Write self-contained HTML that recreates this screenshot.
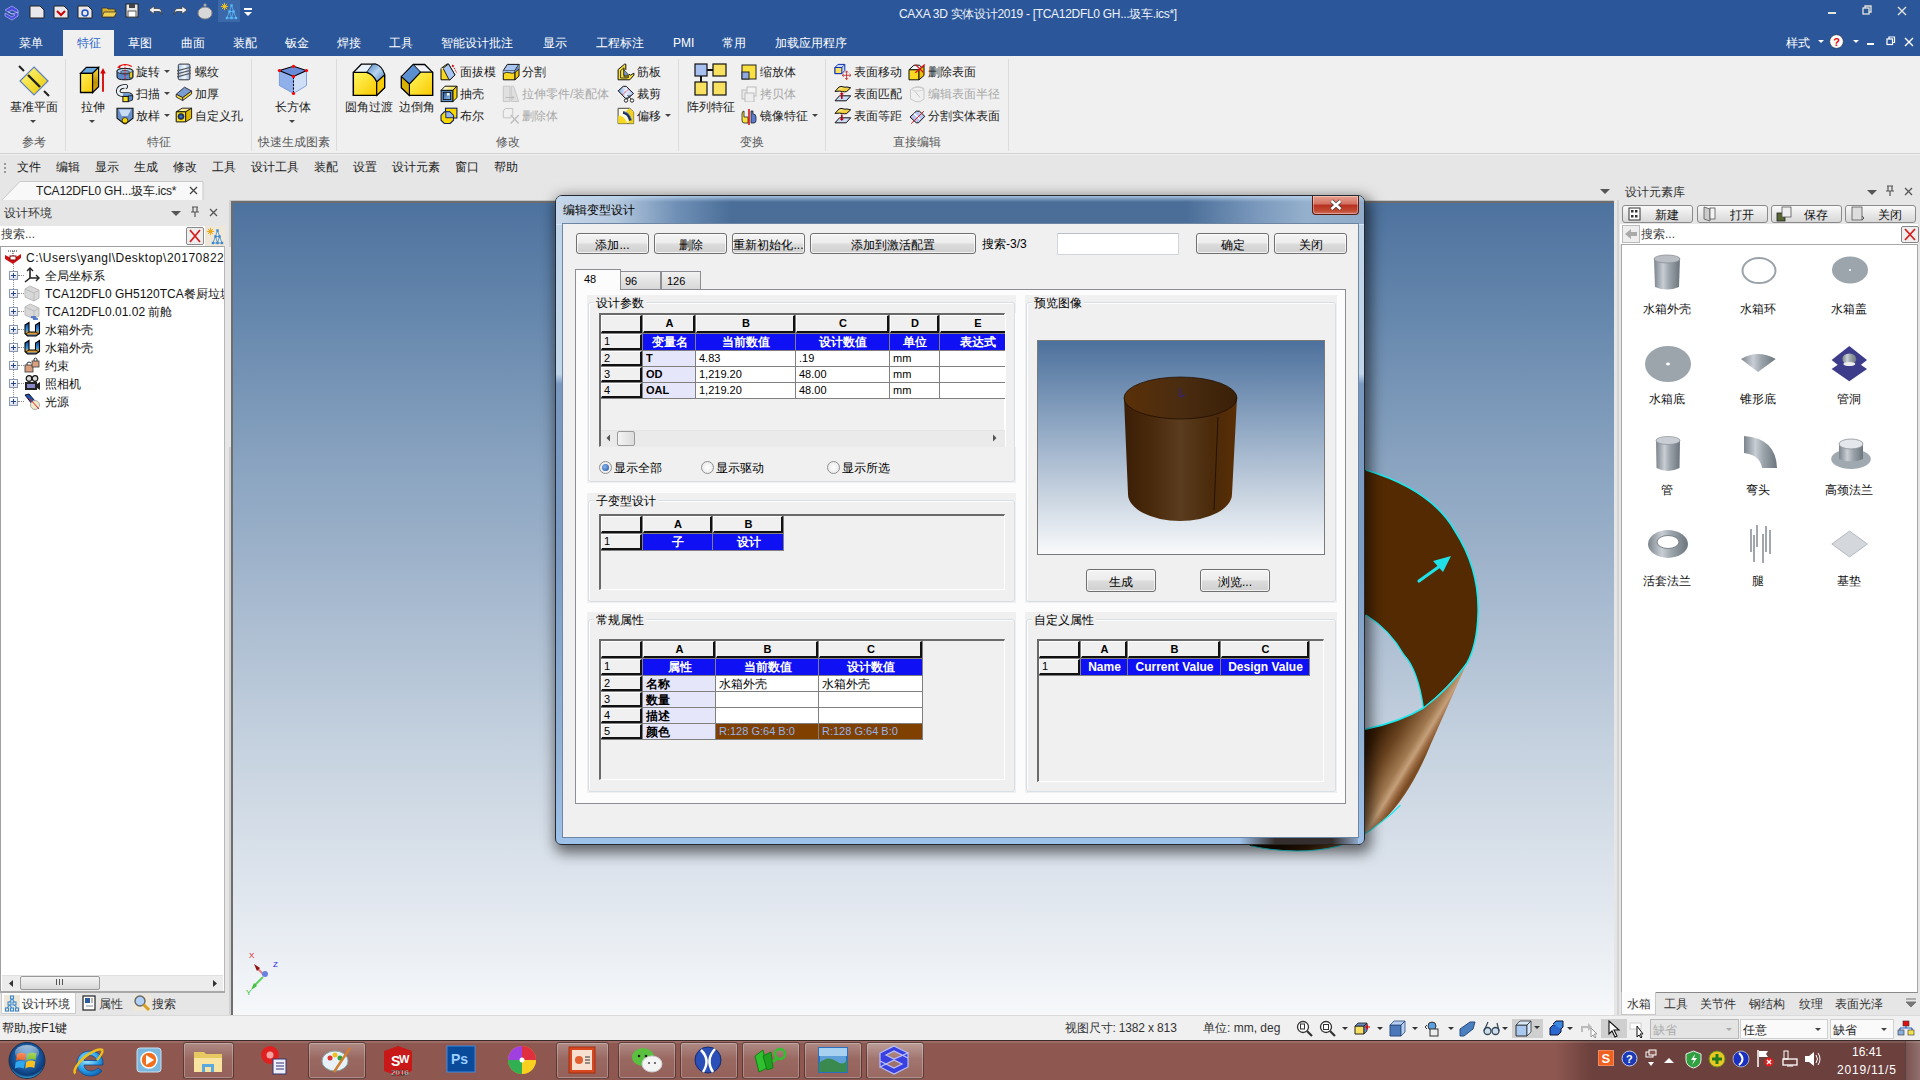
<!DOCTYPE html><html><head><meta charset="utf-8"><style>*{margin:0;padding:0;box-sizing:border-box}
html,body{width:1920px;height:1080px;overflow:hidden;background:#f0f0f0;font-family:"Liberation Sans",sans-serif;font-size:12px;color:#000}
.a{position:absolute;display:block}
.t{position:absolute;white-space:nowrap;line-height:14px}
</style></head><body><div class="a" style="left:0px;top:0px;width:1920px;height:56px;background:#2b579a"></div>
<svg class="a" style="left:3px;top:4px;" width="16" height="18" viewBox="0 0 16 18"><path d="M2 6 L9 2 L15 6 L15 9 L9 6 L5 8 L9 10 L15 8 L15 12 L9 16 L2 12 L2 9 L9 13 L12 11 L5 8 Z" fill="#4a4ae0" stroke="#c8c8ff" stroke-width="0.6"/></svg>
<svg class="a" style="left:29px;top:5px;" width="16" height="14" viewBox="0 0 16 14"><path d="M1 1 H11 L15 5 V13 H1 Z" fill="#e8e8ec" stroke="#222" stroke-width="1"/></svg>
<svg class="a" style="left:53px;top:5px;" width="16" height="14" viewBox="0 0 16 14"><path d="M1 1 H11 L15 5 V13 H1 Z" fill="#e8e8ec" stroke="#222" stroke-width="1"/><path d="M4 6 L8 10 L12 6" stroke="#c00" stroke-width="2" fill="none"/></svg>
<svg class="a" style="left:77px;top:5px;" width="16" height="14" viewBox="0 0 16 14"><path d="M1 1 H11 L15 5 V13 H1 Z" fill="#e8e8ec" stroke="#222" stroke-width="1"/><circle cx="8" cy="8" r="3" fill="none" stroke="#2050c0" stroke-width="1.5"/></svg>
<svg class="a" style="left:101px;top:6px;" width="16" height="12" viewBox="0 0 16 12"><path d="M1 2 H6 L7 3 H14 V11 H1 Z" fill="#d8b030" stroke="#333" stroke-width="0.8"/><path d="M3 6 H16 L13 11 H1 Z" fill="#f0d050" stroke="#333" stroke-width="0.8"/></svg>
<svg class="a" style="left:125px;top:3px;" width="14" height="15" viewBox="0 0 14 15"><rect x="1" y="1" width="12" height="13" fill="#e8e8e8" stroke="#222"/><rect x="4" y="1" width="6" height="4" fill="#444"/><rect x="3" y="8" width="8" height="6" fill="#fff" stroke="#555"/></svg>
<svg class="a" style="left:148px;top:4px;" width="16" height="12" viewBox="0 0 16 12"><path d="M6 2 L1 6 L6 10 V7.5 H11 Q14 7.5 14 11 Q14 4.5 10 4.5 H6 Z" fill="#f0f0f0" stroke="#444" stroke-width="0.8"/></svg>
<svg class="a" style="left:172px;top:4px;" width="16" height="12" viewBox="0 0 16 12"><path d="M10 2 L15 6 L10 10 V7.5 H5 Q2 7.5 2 11 Q2 4.5 6 4.5 H10 Z" fill="#f0f0f0" stroke="#444" stroke-width="0.8"/></svg>
<svg class="a" style="left:197px;top:2px;" width="16" height="18" viewBox="0 0 16 18"><ellipse cx="8" cy="11" rx="7" ry="6" fill="#d8d8d8" stroke="#888"/><circle cx="8" cy="3" r="1.5" fill="#aaa"/></svg>
<div class="a" style="left:218px;top:0px;width:22px;height:22px;background:#3a68a8"></div>
<svg class="a" style="left:220px;top:2px;" width="18" height="18" viewBox="0 0 18 18"><circle cx="4.5" cy="4.5" r="2" fill="#f0c020"/><path d="M4.5 0.8 V8.2 M0.8 4.5 H8.2 M1.9 1.9 L7.1 7.1 M7.1 1.9 L1.9 7.1" stroke="#f0c020" stroke-width=".9"/><path d="M11.5 3.5 L7 16 M11.5 3.5 L16 16 M9.5 9.5 H13.5 M7 16 H16 M9.5 9.5 L11.5 16 M13.5 9.5 L11.5 16" stroke="#5ab8f8" stroke-width=".8" fill="none"/><g fill="#5ab8f8"><rect x="10.3" y="2.3" width="2.4" height="2.4"/><rect x="8.3" y="8.3" width="2.4" height="2.4"/><rect x="12.3" y="8.3" width="2.4" height="2.4"/><rect x="5.8" y="14.8" width="2.4" height="2.4"/><rect x="10.3" y="14.8" width="2.4" height="2.4"/><rect x="14.8" y="14.8" width="2.4" height="2.4"/></g></svg>
<div class="a" style="left:244px;top:8px;width:8px;height:1.5px;background:#fff"></div>
<svg class="a" style="left:243px;top:11px;" width="10" height="6" viewBox="0 0 10 6"><path d="M1 1 H9 L5 5 Z" fill="#fff"/></svg>
<div class="t " style="left:899px;top:7px;font-size:12px;color:#eef2f8;letter-spacing:-0.3px">CAXA 3D 实体设计2019 - [TCA12DFL0 GH...圾车.ics*]</div>
<div class="a" style="left:1828px;top:12px;width:8px;height:2px;background:#e4e4dc"></div>
<svg class="a" style="left:1862px;top:5px;" width="11" height="10" viewBox="0 0 11 10"><rect x="1" y="3" width="6" height="6" fill="none" stroke="#e4e4dc" stroke-width="1.3"/><path d="M3 3 V1 H9 V7 H7" fill="none" stroke="#e4e4dc" stroke-width="1.3"/></svg>
<svg class="a" style="left:1897px;top:6px;" width="10" height="10" viewBox="0 0 10 10"><path d="M1 1 L9 9 M9 1 L1 9" stroke="#e4e4dc" stroke-width="1.4"/></svg>
<div class="a" style="left:63px;top:30px;width:51px;height:26px;background:#f0f0f0"></div>
<div class="t " style="left:19px;top:36px;font-size:12px;color:#fff">菜单</div>
<div class="t " style="left:77px;top:36px;font-size:12px;color:#2b66c8">特征</div>
<div class="t " style="left:128px;top:36px;font-size:12px;color:#fff">草图</div>
<div class="t " style="left:181px;top:36px;font-size:12px;color:#fff">曲面</div>
<div class="t " style="left:233px;top:36px;font-size:12px;color:#fff">装配</div>
<div class="t " style="left:285px;top:36px;font-size:12px;color:#fff">钣金</div>
<div class="t " style="left:337px;top:36px;font-size:12px;color:#fff">焊接</div>
<div class="t " style="left:389px;top:36px;font-size:12px;color:#fff">工具</div>
<div class="t " style="left:441px;top:36px;font-size:12px;color:#fff">智能设计批注</div>
<div class="t " style="left:543px;top:36px;font-size:12px;color:#fff">显示</div>
<div class="t " style="left:596px;top:36px;font-size:12px;color:#fff">工程标注</div>
<div class="t " style="left:673px;top:36px;font-size:12px;color:#fff">PMI</div>
<div class="t " style="left:722px;top:36px;font-size:12px;color:#fff">常用</div>
<div class="t " style="left:775px;top:36px;font-size:12px;color:#fff">加载应用程序</div>
<div class="t " style="left:1786px;top:36px;font-size:12px;color:#fff">样式</div>
<div class="a" style="left:1817.5px;top:40.25px;width:0;height:0;border-left:3.5px solid transparent;border-right:3.5px solid transparent;border-top:3.5px solid #fff"></div>
<svg class="a" style="left:1829px;top:34px;" width="15" height="15" viewBox="0 0 15 15"><circle cx="7.5" cy="7.5" r="6.8" fill="#fff" stroke="#333" stroke-width="0.6"/><text x="7.5" y="12" font-size="11" font-weight="bold" text-anchor="middle" fill="#e00" font-family="Liberation Sans">?</text></svg>
<div class="a" style="left:1852.5px;top:40.25px;width:0;height:0;border-left:3.5px solid transparent;border-right:3.5px solid transparent;border-top:3.5px solid #fff"></div>
<div class="a" style="left:1867px;top:43px;width:7px;height:2px;background:#fff"></div>
<svg class="a" style="left:1886px;top:36px;" width="10" height="10" viewBox="0 0 10 10"><rect x="1" y="3" width="5.5" height="5.5" fill="none" stroke="#fff" stroke-width="1.2"/><path d="M3 3 V1 H8.5 V6.5 H6.5" fill="none" stroke="#fff" stroke-width="1.2"/></svg>
<svg class="a" style="left:1904px;top:37px;" width="10" height="10" viewBox="0 0 10 10"><path d="M1 1 L9 9 M9 1 L1 9" stroke="#fff" stroke-width="1.4"/></svg>
<div class="a" style="left:0px;top:56px;width:1920px;height:98px;background:#f0f0f0;border-bottom:1px solid #d2d2d2"></div>
<div class="a" style="left:65px;top:59px;width:1px;height:92px;background:#dcdcdc"></div>
<div class="a" style="left:251px;top:59px;width:1px;height:92px;background:#dcdcdc"></div>
<div class="a" style="left:336px;top:59px;width:1px;height:92px;background:#dcdcdc"></div>
<div class="a" style="left:678px;top:59px;width:1px;height:92px;background:#dcdcdc"></div>
<div class="a" style="left:825px;top:59px;width:1px;height:92px;background:#dcdcdc"></div>
<div class="a" style="left:1008px;top:59px;width:1px;height:92px;background:#dcdcdc"></div>
<div class="t " style="left:-66.0px;width:200px;text-align:center;top:135px;font-size:12px;color:#5a5a5a">参考</div>
<div class="t " style="left:59.0px;width:200px;text-align:center;top:135px;font-size:12px;color:#5a5a5a">特征</div>
<div class="t " style="left:194.0px;width:200px;text-align:center;top:135px;font-size:12px;color:#5a5a5a">快速生成图素</div>
<div class="t " style="left:408.0px;width:200px;text-align:center;top:135px;font-size:12px;color:#5a5a5a">修改</div>
<div class="t " style="left:652.0px;width:200px;text-align:center;top:135px;font-size:12px;color:#5a5a5a">变换</div>
<div class="t " style="left:817.0px;width:200px;text-align:center;top:135px;font-size:12px;color:#5a5a5a">直接编辑</div>
<svg class="a" style="left:17px;top:64px;" width="34" height="34" viewBox="0 0 34 34"><defs><linearGradient id="jz" x1="0" y1="0" x2="1" y2="1"><stop offset="0" stop-color="#fff880"/><stop offset="1" stop-color="#e8c800"/></linearGradient></defs><path d="M2 2 L7 7 M27 27 L32 32" stroke="#222" stroke-width="2"/><path d="M17 3 L31 17 L17 31 L3 17 Z" fill="url(#jz)" stroke="#6080c0" stroke-width="1.2"/><path d="M11 11 L23 23" stroke="#222" stroke-width="2.4"/></svg>
<div class="t " style="left:10px;top:100px;font-size:12px;color:#222">基准平面</div>
<div class="a" style="left:30px;top:119.5px;width:0;height:0;border-left:3px solid transparent;border-right:3px solid transparent;border-top:3px solid #444"></div>
<svg class="a" style="left:75px;top:62px;" width="35" height="35" viewBox="0 0 35 35"><defs><linearGradient id="lg1" x1="0" y1="0" x2="1" y2="1"><stop offset="0" stop-color="#fff060"/><stop offset="1" stop-color="#f8c800"/></linearGradient><linearGradient id="lg2" x1="0" y1="0" x2="0" y2="1"><stop offset="0" stop-color="#f8e040"/><stop offset=".6" stop-color="#c09000"/><stop offset="1" stop-color="#e0b000"/></linearGradient></defs><path d="M5.5 11.4 L11.3 5.4 H23.6 L17.6 11.4 Z" fill="#6aa8e0" stroke="#000" stroke-width="1.1"/><path d="M5.5 11.4 H17.6 V30.5 H5.5 Z" fill="url(#lg1)" stroke="#000" stroke-width="1.3"/><path d="M17.6 11.4 L23.6 5.4 V24.8 L17.6 30.5 Z" fill="url(#lg2)" stroke="#000" stroke-width="1.2"/><path d="M28 29.7 V10" stroke="#d80000" stroke-width="1.8"/><path d="M25.2 11.5 L28 6 L30.8 11.5 Z" fill="#d80000"/></svg>
<div class="t " style="left:81px;top:100px;font-size:12px;color:#222">拉伸</div>
<div class="a" style="left:89px;top:119.5px;width:0;height:0;border-left:3px solid transparent;border-right:3px solid transparent;border-top:3px solid #444"></div>
<svg class="a" style="left:114px;top:62px;" width="80" height="64" viewBox="0 0 80 64"><defs><linearGradient id="thg" x1="0" x2="1"><stop offset="0" stop-color="#a8c8f0"/><stop offset=".55" stop-color="#f4f8ff"/><stop offset="1" stop-color="#90b0e0"/></linearGradient></defs><path d="M3 9 Q3 6.5 11 6.5 Q19 6.5 19 9 V15 Q19 17.8 11 17.8 Q3 17.8 3 15 Z" fill="#5a88c8" stroke="#111" stroke-width="1"/><ellipse cx="11" cy="9.2" rx="8" ry="2.8" fill="#b8d4f0" stroke="#111" stroke-width=".8"/><ellipse cx="11" cy="10" rx="4.5" ry="1.6" fill="#7aa0d0" stroke="#111" stroke-width=".6"/><path d="M15.7 10.7 L18.4 9.5 V15.5 L15.7 16.2 Z" fill="#f8e020" stroke="#111" stroke-width=".6"/><path d="M11 2.5 V18" stroke="#e00" stroke-width="1" stroke-dasharray="1.6 1"/><path d="M5 4.5 Q11 0.5 17.8 4.5" stroke="#e00" stroke-width="1.2" fill="none"/><path d="M3 5.5 L6.5 2.8 L6.2 6.2 Z" fill="#e00"/><path d="M11 25.5 Q12.5 24 11 24.2 Q4.5 24.8 4.2 29 Q4 32.3 9 32.6 H14.5 Q17 32.8 17 35.5" fill="none" stroke="#111" stroke-width="4.6"/><path d="M11 25.5 Q12.5 24 11 24.2 Q4.5 24.8 4.2 29 Q4 32.3 9 32.6 H14.5 Q17 32.8 17 35.5" fill="none" stroke="#e8f0fa" stroke-width="2.8"/><path d="M9 32.6 H14.5 Q17 32.8 17 35.5" fill="none" stroke="#6a98d0" stroke-width="2.8"/><path d="M14.2 34 L18.6 33.5 V38 L14.2 39.7 Z" fill="#5a88c8" stroke="#111" stroke-width=".8"/><rect x="8.9" y="34.4" width="5.3" height="5.3" fill="#f8e020" stroke="#111" stroke-width="1"/><path d="M3 46.2 H19 V56.3 L11.9 61.6 H10.1 L3 56.3 Z" fill="#6a90c8" stroke="#111" stroke-width="1.1"/><path d="M4.8 47.4 H17.2 L13.6 53.9 H7.7 Z" fill="#c8dcf4"/><circle cx="11" cy="58.4" r="2.8" fill="#f8d800" stroke="#111" stroke-width=".7"/><rect x="64.3" y="2.1" width="11.6" height="15.7" rx="1.5" fill="url(#thg)" stroke="#333" stroke-width="1"/><path d="M63.1 8.9 L76.7 5.3 M63.1 11.9 L76.7 8.3 M63.1 14.9 L76.7 11.3" stroke="#555" stroke-width="1.1"/><path d="M70.5 25.2 L77.6 29 L68.7 35.6 L62.2 32.3 Z" fill="#7a9cd0" stroke="#223" stroke-width=".9"/><path d="M62.2 32.3 L68.7 35.6 V38.5 L62.2 35 Z" fill="#f8e040" stroke="#223" stroke-width=".9"/><path d="M68.7 35.6 L77.6 29 V32 L68.7 38.5 Z" fill="#f0d020" stroke="#223" stroke-width=".9"/><path d="M62.2 49.8 L68.1 46.2 H77.6 L71.7 49.8 Z" fill="#fff090" stroke="#111" stroke-width=".9"/><path d="M62.2 49.8 H71.7 V59.9 H62.2 Z" fill="#f8e020" stroke="#111" stroke-width="1"/><path d="M71.7 49.8 L77.6 46.2 V56.3 L71.7 59.9 Z" fill="#e0b800" stroke="#111" stroke-width=".9"/><circle cx="67" cy="54.5" r="3" fill="#1a3a80" stroke="#111" stroke-width=".6"/><circle cx="67" cy="54.5" r="1.3" fill="#4a78c0"/></svg>
<div class="t " style="left:136px;top:65px;font-size:12px;color:#222">旋转</div>
<div class="a" style="left:164px;top:69.5px;width:0;height:0;border-left:3px solid transparent;border-right:3px solid transparent;border-top:3px solid #444"></div>
<div class="t " style="left:136px;top:87px;font-size:12px;color:#222">扫描</div>
<div class="a" style="left:164px;top:91.5px;width:0;height:0;border-left:3px solid transparent;border-right:3px solid transparent;border-top:3px solid #444"></div>
<div class="t " style="left:136px;top:109px;font-size:12px;color:#222">放样</div>
<div class="a" style="left:164px;top:113.5px;width:0;height:0;border-left:3px solid transparent;border-right:3px solid transparent;border-top:3px solid #444"></div>
<div class="t " style="left:195px;top:65px;font-size:12px;color:#222">螺纹</div>
<div class="t " style="left:195px;top:87px;font-size:12px;color:#222">加厚</div>
<div class="t " style="left:195px;top:109px;font-size:12px;color:#222">自定义孔</div>
<svg class="a" style="left:270px;top:60px;" width="46" height="40" viewBox="0 0 46 40"><path d="M9.4 10.5 L23.5 16.4 V33.5 L9.4 25.5 Z" fill="#90b0ec" stroke="#6a90d8" stroke-width=".8"/><path d="M23.5 16.4 L36.5 10.5 V25.5 L23.5 33.5 Z" fill="#cfe0f6" stroke="#6a90d8" stroke-width=".8"/><path d="M9.4 10.5 L23.5 6.3 L36.5 10.5 L23.5 16.4 Z" fill="#6a8cd8" stroke="#000" stroke-width="1.1"/><path d="M23.5 17 V33" stroke="#000" stroke-width="1.1" stroke-dasharray="2 1.5"/><g fill="#f00"><circle cx="9.4" cy="10.5" r="1.6"/><circle cx="23.5" cy="6.3" r="1.6"/><circle cx="36.5" cy="10.5" r="1.6"/><circle cx="23.5" cy="16.4" r="1.6"/><circle cx="23.5" cy="33.5" r="1.6"/></g></svg>
<div class="t " style="left:275px;top:100px;font-size:12px;color:#222">长方体</div>
<div class="a" style="left:289px;top:119.5px;width:0;height:0;border-left:3px solid transparent;border-right:3px solid transparent;border-top:3px solid #444"></div>
<svg class="a" style="left:345px;top:60px;" width="95" height="40" viewBox="0 0 95 40"><defs><linearGradient id="yg" x1="0" y1="0" x2="1" y2="1"><stop offset="0" stop-color="#fff860"/><stop offset="1" stop-color="#f8c800"/></linearGradient><linearGradient id="bg2" x1="0" y1="0" x2="1" y2="1"><stop offset="0" stop-color="#4a80c0"/><stop offset=".5" stop-color="#b8d4f0"/><stop offset="1" stop-color="#4a80c0"/></linearGradient></defs><path d="M8.4 12.4 L16.3 4.2 H30.7 Q37 6 39.6 14.8 V27.7 L31.7 35.4 H8.4 Z" fill="#e8f0f8" stroke="#000" stroke-width="1.3"/><path d="M21.5 12.4 L27.5 4.2 H30.7 Q37 6 39.6 14.8 L31.7 22 Q28 14 21.5 12.4 Z" fill="url(#bg2)" stroke="#000" stroke-width=".8"/><path d="M8.4 12.4 H21.5 Q28 14 31.7 22 V35.4 H8.4 Z" fill="url(#yg)" stroke="#000" stroke-width="1.3"/><path d="M31.7 22 L39.6 14.8 V27.7 L31.7 35.4 Z" fill="#f8cc00" stroke="#000" stroke-width="1.2"/><path d="M56.4 16.6 L68.3 4.5 H79.7 L87.6 12.4 V35.4 H64.4 L56.4 27.7 Z" fill="#f0f4fa" stroke="#000" stroke-width="1.3"/><path d="M56.4 16.6 L68.3 4.5 L75.7 12.2 L64.4 24 Z" fill="#5a90d0" stroke="#000" stroke-width="1"/><path d="M75.7 12.2 H87.6 V35.4 H64.4 V24 Z" fill="url(#yg)" stroke="#000" stroke-width="1.2"/><path d="M56.4 16.6 L64.4 24 V35.4 L56.4 27.7 Z" fill="#d8b000" stroke="#000" stroke-width="1.1"/></svg>
<div class="t " style="left:345px;top:100px;font-size:12px;color:#222">圆角过渡</div>
<div class="t " style="left:399px;top:100px;font-size:12px;color:#222">边倒角</div>
<svg class="a" style="left:438px;top:62px;" width="84" height="64" viewBox="0 0 84 64"><defs><linearGradient id="shg" x1="0" y1="0" x2="1" y2="1"><stop offset="0" stop-color="#2a5a9a"/><stop offset="1" stop-color="#9ac0f0"/></linearGradient><linearGradient id="tyg" x1="0" y1="0" x2="1" y2="0"><stop offset="0" stop-color="#fff"/><stop offset="1" stop-color="#f8e020"/></linearGradient></defs><path d="M3 6.5 L9 2 H10.5 L17 13 L12 17.8 H3 Z" fill="#f8d820" stroke="#111" stroke-width="1"/><path d="M5 6.2 L10.5 2 L17 13 L12 17.8 H11 L5.5 7 Z" fill="#a8c4f0" stroke="#111" stroke-width=".9"/><path d="M3.2 6.6 L5 6.2 L5.5 7 L3.2 7.2 Z" fill="#fff"/><path d="M18.6 10.5 L15 4" stroke="#c00" stroke-width=".9" stroke-dasharray="1.2 .8"/><path d="M13.6 5 L14.3 2.5 L16.4 4 Z" fill="#c00"/><path d="M65.3 8.5 L69.3 2.4 H81 L77 8.5 Z" fill="#a8c4f0" stroke="#111" stroke-width="1"/><path d="M65.3 8.5 H77 V17.8 H65.3 Z" fill="#f8d820" stroke="#111" stroke-width="1"/><path d="M65.3 8.5 H77 V10.5 Q74 12 72 10.8 Q69 9.8 66.5 11 L65.3 11.5 Z" fill="#a8c4f0"/><path d="M77 8.5 L81 2.4 V14 L77 17.8 Z" fill="#f0c800" stroke="#111" stroke-width="1"/><path d="M77 8.5 L81 2.4 V7 L77 10.5 Z" fill="#6a90c8"/><path d="M65.3 11.5 Q69 9.5 72 10.8 Q74 12 77 10.5 L81 7" fill="none" stroke="#111" stroke-width=".8"/><path d="M3.1 28.4 L7 24.2 H19 L14.8 28.4 Z" fill="url(#tyg)" stroke="#111" stroke-width="1"/><path d="M14.8 28.4 L19 24.2 V35.6 L14.8 39.6 Z" fill="#f8d000" stroke="#111" stroke-width="1"/><rect x="3.1" y="28.4" width="11.7" height="11.2" fill="#5a90d0" stroke="#111" stroke-width="1"/><rect x="5.3" y="30.3" width="7.3" height="7.2" fill="url(#shg)" stroke="#111" stroke-width=".9"/><rect x="9" y="31" width="2.5" height="2.5" fill="#fff"/><rect x="7.5" y="46.2" width="11.4" height="9.8" fill="#f8d800" stroke="#10205a" stroke-width="1.1"/><path d="M6.3 49.8 H11.8 L15.5 53.5 V58.2 L12.2 61.5 H6.3 L3 58.2 V53.2 Z" fill="#f8d800" stroke="#10205a" stroke-width="1.1"/><path d="M7.8 49.8 H11.8 L15.5 53.5 V55.7 H7.8 Z" fill="#9ab8e8" stroke="#10205a" stroke-width=".9"/><path d="M65.3 24.2 H72 V39.5 H65.3 Z M73.2 24.2 H75.6 L80.7 39.5 H73.2 Z" fill="#e0e0e0" stroke="#c4c4c4" stroke-width=".9"/><path d="M67.6 35.5 H76 M74.3 33.8 L76 35.5 L74.3 37.2" stroke="#bbb" stroke-width="1" fill="none"/><path d="M65.3 49 L67.3 46.5 H74.8 V53.5 L72.8 55.8 H65.3 Z" fill="#f0f0f0" stroke="#c0c0c0" stroke-width=".9"/><path d="M72.7 53 L80.7 61.5 M80.7 53 L72.7 61.5" stroke="#c0c0c0" stroke-width="1.6"/></svg>
<div class="t " style="left:460px;top:65px;font-size:12px;color:#222">面拔模</div>
<div class="t " style="left:460px;top:87px;font-size:12px;color:#222">抽壳</div>
<div class="t " style="left:460px;top:109px;font-size:12px;color:#222">布尔</div>
<div class="t " style="left:522px;top:65px;font-size:12px;color:#222">分割</div>
<div class="t " style="left:522px;top:87px;font-size:12px;color:#a8a8a8">拉伸零件/装配体</div>
<div class="t " style="left:522px;top:109px;font-size:12px;color:#a8a8a8">删除体</div>
<svg class="a" style="left:614px;top:62px;" width="64" height="64" viewBox="0 0 64 64"><defs><linearGradient id="trg" x1="0" y1="0" x2="1" y2="0"><stop offset="0" stop-color="#7aa0e0"/><stop offset=".5" stop-color="#e8f0ff"/><stop offset="1" stop-color="#a8c0f0"/></linearGradient></defs><path d="M4.1 7.6 L10.5 2.2 H11.8 V8.6 L16.3 13.3 L19.9 11.2 V13.2 L15.8 17.8 H4.1 Z" fill="#f8e040" stroke="#111" stroke-width="1"/><path d="M6.6 8.6 L10 5.8 V14.8 H15 L13 16 H6.6 Z" fill="none" stroke="#111" stroke-width=".8"/><path d="M9.8 7.4 L15 13.3 H9.8 Z" fill="#7a9ad8" stroke="#111" stroke-width=".7"/><path d="M11.3 7.8 L15.3 12" stroke="#fff" stroke-width="1.2"/><path d="M4.2 28.8 L9.3 24.3 H12.2 L19.5 31.5 L14.2 36.2 H11.2 Z" fill="url(#trg)" stroke="#111" stroke-width="1"/><path d="M8.2 33 L14.6 27.2" stroke="#e00" stroke-width=".9" stroke-dasharray="1.2 .8"/><circle cx="12" cy="38.5" r="1.7" fill="#fff" stroke="#111" stroke-width=".9"/><circle cx="18" cy="38.5" r="1.7" fill="#fff" stroke="#111" stroke-width=".9"/><path d="M12.8 37 L16.5 33 M17.2 37 L13.5 33" stroke="#333" stroke-width="1"/><path d="M4.1 46.3 H15.8 L19.6 50 V61.6 H4.1 Z" fill="#fffbe0" stroke="#444" stroke-width="1"/><path d="M4.1 53.8 Q10 53 13.5 61.6 H4.1 Z" fill="#f8d820"/><path d="M15.8 46.3 L19.6 50 V61.6 H14.5 Q15 52 12 49 Z" fill="#f0d020"/><path d="M9 50.3 Q14.5 51 16.5 58.5" stroke="#1a3060" stroke-width="2.8" fill="none"/><path d="M9.5 49.6 Q15.5 50.5 17.5 57.5" stroke="#7a98c8" stroke-width=".7" fill="none"/></svg>
<div class="t " style="left:637px;top:65px;font-size:12px;color:#222">筋板</div>
<div class="t " style="left:637px;top:87px;font-size:12px;color:#222">裁剪</div>
<div class="t " style="left:637px;top:109px;font-size:12px;color:#222">偏移</div>
<div class="a" style="left:665px;top:113.5px;width:0;height:0;border-left:3px solid transparent;border-right:3px solid transparent;border-top:3px solid #444"></div>
<svg class="a" style="left:694px;top:63px;" width="34" height="34" viewBox="0 0 34 34"><rect x="1" y="1" width="12" height="12" fill="#a8c0f0" stroke="#111" stroke-width="1.2"/><rect x="19" y="1" width="13" height="12" fill="#f8e060" stroke="#111" stroke-width="1.2"/><rect x="1" y="19" width="12" height="13" fill="#f8e060" stroke="#111" stroke-width="1.2"/><rect x="19" y="19" width="13" height="13" fill="#f8e060" stroke="#111" stroke-width="1.2"/><path d="M13 7 H19 M7 13 V19" stroke="#111" stroke-width="2"/></svg>
<div class="t " style="left:687px;top:100px;font-size:12px;color:#222">阵列特征</div>
<svg class="a" style="left:741px;top:64px;" width="16" height="16" viewBox="0 0 16 16"><rect x="1" y="1" width="14" height="14" fill="#f8e040" stroke="#222"/><rect x="1" y="8" width="7" height="7" fill="#90a8e0" stroke="#222"/></svg>
<div class="t " style="left:760px;top:65px;font-size:12px;color:#222">缩放体</div>
<svg class="a" style="left:741px;top:86px;" width="16" height="16" viewBox="0 0 16 16"><rect x="1" y="4" width="9" height="9" fill="#e8e8e8" stroke="#bbb"/><rect x="6" y="1" width="9" height="9" fill="#f4f4f4" stroke="#bbb"/><rect x="4" y="7" width="9" height="9" fill="#eee" stroke="#bbb"/></svg>
<div class="t " style="left:760px;top:87px;font-size:12px;color:#a8a8a8">拷贝体</div>
<svg class="a" style="left:741px;top:108px;" width="16" height="17" viewBox="0 0 16 17"><path d="M1 6 Q1 3 3 3 V9 H7 V15 H3 Q1 15 1 12 Z" fill="#f8e040" stroke="#222" stroke-width=".8"/><path d="M8 1 V17" stroke="#d00" stroke-width="1.5"/><path d="M10 3 V15 H13 Q15 15 15 12 V9 Q15 6 12 6 V3 Z" fill="#5a7ad0" stroke="#222" stroke-width=".8"/></svg>
<div class="t " style="left:760px;top:109px;font-size:12px;color:#222">镜像特征</div>
<div class="a" style="left:812px;top:113.5px;width:0;height:0;border-left:3px solid transparent;border-right:3px solid transparent;border-top:3px solid #444"></div>
<svg class="a" style="left:830px;top:62px;" width="100" height="64" viewBox="0 0 100 64"><defs><linearGradient id="wyg" x1="0" y1="0" x2="1" y2="1"><stop offset="0" stop-color="#fff4a0"/><stop offset="1" stop-color="#e8b800"/></linearGradient></defs><path d="M5 5.5 L8 2.4 H14.8 V8.6 L11.8 11.6 H5 Z" fill="#c8dcf8" stroke="#1030b0" stroke-width="1"/><rect x="5" y="5.5" width="6.8" height="6.1" fill="#f8e060" stroke="#1030b0" stroke-width="1"/><path d="M11.8 5.5 L14.8 2.4" stroke="#1030b0" stroke-width=".8"/><path d="M16.6 9.2 V17.4 M12.5 13.3 H20.7" stroke="#c03030" stroke-width=".9"/><path d="M15.2 10.5 L16.6 8.9 L18 10.5 M15.2 16.1 L16.6 17.7 L18 16.1 M13.8 11.9 L12.2 13.3 L13.8 14.7 M19.4 11.9 L21 13.3 L19.4 14.7" stroke="#c03030" stroke-width=".9" fill="none"/><path d="M5 29.4 L9 25 Q11 24 13 24.8 Q15 25.5 17 25 L20.7 25.8 L16.7 29.5 Q14.5 30.2 12.5 29.5 Q10 28.8 5 29.4 Z" fill="url(#wyg)" stroke="#111" stroke-width="1"/><path d="M5 38.8 L9.5 33.8 H20.7 L16.2 38.8 Z" fill="#c8dcf8" stroke="#111" stroke-width="1"/><path d="M11.8 37 V31.5" stroke="#c00010" stroke-width="1.6"/><path d="M9.6 32.2 L11.8 29.9 L14 32.2 Z" fill="#c00010"/><path d="M5 51.4 L9 47 Q11 46 13 46.8 Q15 47.5 17 47 L20.7 47.8 L16.7 51.5 Q14.5 52.2 12.5 51.5 Q10 50.8 5 51.4 Z" fill="url(#wyg)" stroke="#111" stroke-width="1"/><path d="M5 60.8 L9.5 55.8 H20.7 L16.2 60.8 Z" fill="#c8dcf8" stroke="#111" stroke-width="1"/><path d="M11.8 52.5 V57.5" stroke="#c00010" stroke-width="1.6"/><path d="M9.6 56.7 L11.8 59 L14 56.7 Z" fill="#c00010"/><path d="M79 7.8 L84 3.2 H89.5 L94 7.8 Z" fill="#f4f8ff" stroke="#111" stroke-width="1"/><path d="M79 7.8 H89 V17.8 H79 Z" fill="#f8d820" stroke="#111" stroke-width="1"/><path d="M89 7.8 L94 3.8 V13.5 L89 17.8 Z" fill="#f0c000" stroke="#111" stroke-width="1"/><path d="M85.3 10.7 L94.8 2.4 M85.5 2.6 L93.5 10.5" stroke="#e01010" stroke-width="1.3"/><path d="M82 26.5 L86 24.9 H90 L94 26.5 V37 L90 39.7 H86 L80.5 37 V28 Z" fill="#f0f0f0" stroke="#c8c8c8" stroke-width="1"/><ellipse cx="87.5" cy="27.2" rx="5.8" ry="1.8" fill="none" stroke="#c8c8c8" stroke-width=".8"/><path d="M85 29.5 L90 35.5" stroke="#c8c8c8" stroke-width="1"/><path d="M80 55 L86.3 49.2 H89.5 L94.8 54.3 L88.5 60.8 H86.3 Z" fill="#b8c8f0" stroke="#111" stroke-width="1"/><path d="M84 51.5 L90 57.5" stroke="#fff" stroke-width="1.2"/><path d="M81.2 61.6 L93.9 49.2" stroke="#e01010" stroke-width="1"/></svg>
<div class="t " style="left:854px;top:65px;font-size:12px;color:#222">表面移动</div>
<div class="t " style="left:854px;top:87px;font-size:12px;color:#222">表面匹配</div>
<div class="t " style="left:854px;top:109px;font-size:12px;color:#222">表面等距</div>
<div class="t " style="left:928px;top:65px;font-size:12px;color:#222">删除表面</div>
<div class="t " style="left:928px;top:87px;font-size:12px;color:#a8a8a8">编辑表面半径</div>
<div class="t " style="left:928px;top:109px;font-size:12px;color:#222">分割实体表面</div>
<div class="a" style="left:0px;top:155px;width:1920px;height:26px;background:#e6e6e6"></div>
<div class="a" style="left:4px;top:163px;width:2px;height:2px;background:#999"></div>
<div class="a" style="left:4px;top:167px;width:2px;height:2px;background:#999"></div>
<div class="a" style="left:4px;top:171px;width:2px;height:2px;background:#999"></div>
<div class="t " style="left:17px;top:160px;font-size:12px;color:#222">文件</div>
<div class="t " style="left:56px;top:160px;font-size:12px;color:#222">编辑</div>
<div class="t " style="left:95px;top:160px;font-size:12px;color:#222">显示</div>
<div class="t " style="left:134px;top:160px;font-size:12px;color:#222">生成</div>
<div class="t " style="left:173px;top:160px;font-size:12px;color:#222">修改</div>
<div class="t " style="left:212px;top:160px;font-size:12px;color:#222">工具</div>
<div class="t " style="left:251px;top:160px;font-size:12px;color:#222">设计工具</div>
<div class="t " style="left:314px;top:160px;font-size:12px;color:#222">装配</div>
<div class="t " style="left:353px;top:160px;font-size:12px;color:#222">设置</div>
<div class="t " style="left:392px;top:160px;font-size:12px;color:#222">设计元素</div>
<div class="t " style="left:455px;top:160px;font-size:12px;color:#222">窗口</div>
<div class="t " style="left:494px;top:160px;font-size:12px;color:#222">帮助</div>
<div class="a" style="left:0px;top:181px;width:1920px;height:20px;background:#e6e6e6"></div>
<svg class="a" style="left:0px;top:180px;" width="206" height="21" viewBox="0 0 206 21"><path d="M1 21 L20 1.5 H203 V21 Z" fill="#f8f8f8" stroke="#c8c8c8" stroke-width="1"/></svg>
<div class="a" style="left:204px;top:200px;width:1716px;height:1px;background:#c4c4c4"></div>
<div class="t " style="left:36px;top:184px;font-size:12px;color:#222;letter-spacing:-0.2px">TCA12DFL0 GH...圾车.ics*</div>
<svg class="a" style="left:189px;top:186px;" width="10" height="10" viewBox="0 0 10 10"><path d="M1 1 L8 8 M8 1 L1 8" stroke="#444" stroke-width="1.3"/></svg>
<div class="a" style="left:1600px;top:188.5px;width:0;height:0;border-left:5px solid transparent;border-right:5px solid transparent;border-top:5px solid #555"></div>
<div class="a" style="left:0px;top:200px;width:231px;height:816px;background:#e6e6e6"></div>
<div class="a" style="left:229px;top:200px;width:2px;height:815px;background:#d0d0d0"></div>
<div class="t " style="left:4px;top:206px;font-size:12px;color:#333">设计环境</div>
<div class="a" style="left:171px;top:210.5px;width:0;height:0;border-left:5px solid transparent;border-right:5px solid transparent;border-top:5px solid #555"></div>
<svg class="a" style="left:190px;top:206px;" width="10" height="12" viewBox="0 0 10 12"><path d="M2 1 H8 M3 1 V6 H7 V1 M1 6 H9 M5 6 V11" stroke="#555" stroke-width="1.2" fill="none"/></svg>
<svg class="a" style="left:209px;top:208px;" width="10" height="10" viewBox="0 0 10 10"><path d="M1 1 L8 8 M8 1 L1 8" stroke="#555" stroke-width="1.3"/></svg>
<div class="a" style="left:0px;top:226px;width:206px;height:20px;background:#fff"></div>
<div class="t " style="left:1px;top:227px;font-size:12px;color:#444">搜索...</div>
<div class="a" style="left:186px;top:227px;width:18px;height:18px;background:#eee;border:1px solid #888;border-radius:2px"></div>
<svg class="a" style="left:187px;top:228px;" width="16" height="16" viewBox="0 0 16 16"><path d="M3 2 L13 14 M13 2 L3 14" stroke="#d42020" stroke-width="1.8"/></svg>
<div class="a" style="left:205px;top:226px;width:20px;height:20px;background:#efe8d8"></div>
<svg class="a" style="left:206px;top:227px;" width="18" height="18" viewBox="0 0 18 18"><circle cx="4.5" cy="4.5" r="2" fill="#e8a818"/><path d="M4.5 0.8 V8.2 M0.8 4.5 H8.2 M1.9 1.9 L7.1 7.1 M7.1 1.9 L1.9 7.1" stroke="#e8a818" stroke-width=".9"/><path d="M11.5 3.5 L7 16 M11.5 3.5 L16 16 M9.5 9.5 H13.5 M7 16 H16 M9.5 9.5 L11.5 16 M13.5 9.5 L11.5 16" stroke="#3a88d0" stroke-width=".8" fill="none"/><g fill="#3a88d0"><rect x="10.3" y="2.3" width="2.4" height="2.4"/><rect x="8.3" y="8.3" width="2.4" height="2.4"/><rect x="12.3" y="8.3" width="2.4" height="2.4"/><rect x="5.8" y="14.8" width="2.4" height="2.4"/><rect x="10.3" y="14.8" width="2.4" height="2.4"/><rect x="14.8" y="14.8" width="2.4" height="2.4"/></g></svg>
<div class="a" style="left:0px;top:246px;width:225px;height:747px;background:#fff;border:1px solid #a0a0a0;border-right:1px solid #c8c8c8"></div>
<svg class="a" style="left:4px;top:250px;" width="18" height="16" viewBox="0 0 18 16"><path d="M1 5 L9 9 L17 4 L17 8 L9 14 L1 9 Z" fill="#d01010"/><path d="M4 1 H14 M9 1 V9" stroke="#222" stroke-dasharray="1 1"/><rect x="6" y="6" width="6" height="4" fill="#fff" stroke="#800"/></svg>
<div class="t " style="left:26px;top:251px;font-size:12px;color:#111;letter-spacing:0.5px">C:\Users\yangl\Desktop\20170822</div>
<div class="a" style="left:224px;top:247px;width:1px;height:745px;background:#b8b8b8"></div>
<div class="a" style="left:13px;top:264px;width:1px;height:137px;border-left:1px dotted #888"></div>
<div class="a" style="left:9px;top:271px;width:9px;height:9px;background:linear-gradient(#fff,#dde);border:1px solid #8a9ab0"></div>
<div class="a" style="left:11px;top:275px;width:5px;height:1px;background:#24448a"></div>
<div class="a" style="left:13px;top:273px;width:1px;height:5px;background:#24448a"></div>
<div class="a" style="left:18px;top:275px;width:6px;height:1px;border-top:1px dotted #888"></div>
<svg class="a" style="left:24px;top:267px;" width="16" height="16" viewBox="0 0 16 16"><path d="M6 2 V11 L15 11 M6 11 L1 15" stroke="#222" stroke-width="1.6" fill="none"/><path d="M3 4 L6 1 L9 4 M12 8 L15 11 L12 14" stroke="#222" stroke-width="1.4" fill="none"/></svg>
<div class="t " style="left:45px;top:269px;font-size:12px;color:#111">全局坐标系</div>
<div class="a" style="left:9px;top:289px;width:9px;height:9px;background:linear-gradient(#fff,#dde);border:1px solid #8a9ab0"></div>
<div class="a" style="left:11px;top:293px;width:5px;height:1px;background:#24448a"></div>
<div class="a" style="left:13px;top:291px;width:1px;height:5px;background:#24448a"></div>
<div class="a" style="left:18px;top:293px;width:6px;height:1px;border-top:1px dotted #888"></div>
<svg class="a" style="left:24px;top:285px;" width="16" height="17" viewBox="0 0 16 17"><path d="M1 4 L6 1 L15 5 V13 L10 16 L1 12 Z" fill="#d8d8d8" stroke="#bbb"/><path d="M1 4 L10 8 L15 5 M10 8 V16" stroke="#bbb" fill="none"/></svg>
<div class="t " style="left:45px;top:287px;font-size:12px;color:#111">TCA12DFL0 GH5120TCA餐厨垃圾车</div>
<div class="a" style="left:9px;top:307px;width:9px;height:9px;background:linear-gradient(#fff,#dde);border:1px solid #8a9ab0"></div>
<div class="a" style="left:11px;top:311px;width:5px;height:1px;background:#24448a"></div>
<div class="a" style="left:13px;top:309px;width:1px;height:5px;background:#24448a"></div>
<div class="a" style="left:18px;top:311px;width:6px;height:1px;border-top:1px dotted #888"></div>
<svg class="a" style="left:24px;top:303px;" width="16" height="17" viewBox="0 0 16 17"><path d="M1 4 L6 1 L15 5 V13 L10 16 L1 12 Z" fill="#d8d8d8" stroke="#bbb"/><path d="M1 4 L10 8 L15 5 M10 8 V16" stroke="#bbb" fill="none"/><path d="M7 14 h5 M9 16 h5" stroke="#3060c0" stroke-width="1.4"/></svg>
<div class="t " style="left:45px;top:305px;font-size:12px;color:#111">TCA12DFL0.01.02 前舱</div>
<div class="a" style="left:9px;top:325px;width:9px;height:9px;background:linear-gradient(#fff,#dde);border:1px solid #8a9ab0"></div>
<div class="a" style="left:11px;top:329px;width:5px;height:1px;background:#24448a"></div>
<div class="a" style="left:13px;top:327px;width:1px;height:5px;background:#24448a"></div>
<div class="a" style="left:18px;top:329px;width:6px;height:1px;border-top:1px dotted #888"></div>
<svg class="a" style="left:24px;top:321px;" width="17" height="16" viewBox="0 0 17 16"><defs><linearGradient id="ug" x1="0" y1="0" x2="0" y2="1"><stop offset="0" stop-color="#0a3a90"/><stop offset=".55" stop-color="#3a9ae8"/><stop offset=".8" stop-color="#f0a020"/><stop offset="1" stop-color="#1a60c0"/></linearGradient></defs><path d="M1 4 L5 1.5 V11 H11.5 V4 L15.5 1.5 V12.5 L12 15 H3.5 L1 12.5 Z" fill="url(#ug)" stroke="#000" stroke-width="1.1"/><path d="M5 11 L1.5 13 M11.5 11 L15 13" stroke="#000" stroke-width=".7"/></svg>
<div class="t " style="left:45px;top:323px;font-size:12px;color:#111">水箱外壳</div>
<div class="a" style="left:9px;top:343px;width:9px;height:9px;background:linear-gradient(#fff,#dde);border:1px solid #8a9ab0"></div>
<div class="a" style="left:11px;top:347px;width:5px;height:1px;background:#24448a"></div>
<div class="a" style="left:13px;top:345px;width:1px;height:5px;background:#24448a"></div>
<div class="a" style="left:18px;top:347px;width:6px;height:1px;border-top:1px dotted #888"></div>
<svg class="a" style="left:24px;top:339px;" width="17" height="16" viewBox="0 0 17 16"><defs><linearGradient id="ug" x1="0" y1="0" x2="0" y2="1"><stop offset="0" stop-color="#0a3a90"/><stop offset=".55" stop-color="#3a9ae8"/><stop offset=".8" stop-color="#f0a020"/><stop offset="1" stop-color="#1a60c0"/></linearGradient></defs><path d="M1 4 L5 1.5 V11 H11.5 V4 L15.5 1.5 V12.5 L12 15 H3.5 L1 12.5 Z" fill="url(#ug)" stroke="#000" stroke-width="1.1"/><path d="M5 11 L1.5 13 M11.5 11 L15 13" stroke="#000" stroke-width=".7"/></svg>
<div class="t " style="left:45px;top:341px;font-size:12px;color:#111">水箱外壳</div>
<div class="a" style="left:9px;top:361px;width:9px;height:9px;background:linear-gradient(#fff,#dde);border:1px solid #8a9ab0"></div>
<div class="a" style="left:11px;top:365px;width:5px;height:1px;background:#24448a"></div>
<div class="a" style="left:13px;top:363px;width:1px;height:5px;background:#24448a"></div>
<div class="a" style="left:18px;top:365px;width:6px;height:1px;border-top:1px dotted #888"></div>
<svg class="a" style="left:24px;top:357px;" width="16" height="16" viewBox="0 0 16 16"><rect x="1" y="8" width="8" height="7" fill="#d8a080" stroke="#333" stroke-width=".8"/><rect x="8" y="4" width="7" height="6" fill="#d8a080" stroke="#333" stroke-width=".8"/><path d="M10 4 V2 Q11.5 0 13 2 V4 M3 8 V6 Q5 4 7 6" stroke="#333" fill="none"/></svg>
<div class="t " style="left:45px;top:359px;font-size:12px;color:#111">约束</div>
<div class="a" style="left:9px;top:379px;width:9px;height:9px;background:linear-gradient(#fff,#dde);border:1px solid #8a9ab0"></div>
<div class="a" style="left:11px;top:383px;width:5px;height:1px;background:#24448a"></div>
<div class="a" style="left:13px;top:381px;width:1px;height:5px;background:#24448a"></div>
<div class="a" style="left:18px;top:383px;width:6px;height:1px;border-top:1px dotted #888"></div>
<svg class="a" style="left:24px;top:375px;" width="16" height="16" viewBox="0 0 16 16"><circle cx="5" cy="3.5" r="2.8" fill="#ddd" stroke="#111" stroke-width="1.2"/><circle cx="11" cy="3.5" r="2.8" fill="#ddd" stroke="#111" stroke-width="1.2"/><rect x="1" y="7" width="12" height="8" fill="#222"/><rect x="3" y="9" width="8" height="4" fill="#8888c8"/><path d="M13 9 L16 7 V15 L13 13 Z" fill="#222"/></svg>
<div class="t " style="left:45px;top:377px;font-size:12px;color:#111">照相机</div>
<div class="a" style="left:9px;top:397px;width:9px;height:9px;background:linear-gradient(#fff,#dde);border:1px solid #8a9ab0"></div>
<div class="a" style="left:11px;top:401px;width:5px;height:1px;background:#24448a"></div>
<div class="a" style="left:13px;top:399px;width:1px;height:5px;background:#24448a"></div>
<div class="a" style="left:18px;top:401px;width:6px;height:1px;border-top:1px dotted #888"></div>
<svg class="a" style="left:24px;top:393px;" width="16" height="17" viewBox="0 0 16 17"><path d="M1 2 L5 1 L11 8 L8 11 Z" fill="#2050b0" stroke="#112"/><circle cx="11" cy="12" r="4.5" fill="#f0e8c8" stroke="#aaa"/><path d="M5 5 L15 16" stroke="#d02020" stroke-width="1"/></svg>
<div class="t " style="left:45px;top:395px;font-size:12px;color:#111">光源</div>
<div class="a" style="left:224px;top:247px;width:7px;height:200px;background:#e6e6e6;border-left:1px solid #b8b8b8"></div>
<div class="a" style="left:2px;top:975px;width:221px;height:16px;background:#ececec;border-top:1px solid #e0e0e0"></div>
<svg class="a" style="left:7px;top:979px;" width="8" height="9" viewBox="0 0 8 9"><path d="M6 1 L2 4.5 L6 8 Z" fill="#333"/></svg>
<svg class="a" style="left:211px;top:979px;" width="8" height="9" viewBox="0 0 8 9"><path d="M2 1 L6 4.5 L2 8 Z" fill="#333"/></svg>
<div class="a" style="left:20px;top:976px;width:80px;height:14px;background:linear-gradient(#f4f4f4,#d8d8d8);border:1px solid #999;border-radius:2px"></div>
<div class="a" style="left:56px;top:979px;width:1px;height:6px;background:#555"></div>
<div class="a" style="left:59px;top:979px;width:1px;height:6px;background:#555"></div>
<div class="a" style="left:62px;top:979px;width:1px;height:6px;background:#555"></div>
<div class="a" style="left:0px;top:991px;width:225px;height:2px;background:#a8a8a8"></div>
<div class="a" style="left:1px;top:993px;width:75px;height:21px;background:#fcfcfc;border:1px solid #ccc;border-top:none"></div>
<svg class="a" style="left:4px;top:995px;" width="16" height="17" viewBox="0 0 16 17"><rect x="0" y="0" width="16" height="17" fill="#efe8d8"/><g fill="none" stroke="#3a88d0" stroke-width="1.1"><rect x="6.5" y="1" width="3" height="3"/><rect x="4" y="7" width="3" height="3"/><rect x="9" y="7" width="3" height="3"/><rect x="1.5" y="13" width="3" height="3"/><rect x="6.5" y="13" width="3" height="3"/><rect x="11.5" y="13" width="3" height="3"/><path d="M8 4 L5.5 7 M8 4 L10.5 7 M5.5 10 L3 13 M5.5 10 L8 13 M10.5 10 L13 13"/></g></svg>
<div class="t " style="left:22px;top:997px;font-size:12px;color:#333">设计环境</div>
<svg class="a" style="left:82px;top:995px;" width="14" height="16" viewBox="0 0 14 16"><rect x="1" y="1" width="12" height="14" fill="#fff" stroke="#222" stroke-width="1.2"/><rect x="3" y="3" width="5" height="5" fill="#2a5a9a"/><path d="M10 3 V8 M4 11 H11" stroke="#888" stroke-width="1.2"/></svg>
<div class="t " style="left:99px;top:997px;font-size:12px;color:#333">属性</div>
<svg class="a" style="left:133px;top:994px;" width="18" height="18" viewBox="0 0 18 18"><rect x="0" y="1" width="18" height="16" fill="#efe8d8"/><circle cx="7" cy="7" r="5" fill="#b0d0f8" stroke="#666" stroke-width="1.4"/><path d="M10.5 10.5 L16 16" stroke="#d8a020" stroke-width="3"/></svg>
<div class="t " style="left:152px;top:997px;font-size:12px;color:#333">搜索</div>
<div class="a" style="left:231px;top:201px;width:1383px;height:814px;background:linear-gradient(#4d729e 0%,#6889ae 15%,#89a3c0 32%,#a9bbd0 50%,#c7d3e0 68%,#e0e6ee 85%,#f6f8fa 100%);border-left:2px solid #6e6e6e;border-top:2px solid #6e6e6e"></div>
<svg class="a" style="left:1180px;top:440px;" width="320" height="430" viewBox="0 0 320 430"><defs><linearGradient id="fr" gradientUnits="userSpaceOnUse" x1="186.6500000000001" y1="266" x2="251.25" y2="305.5"><stop offset="0" stop-color="#1e0e02"/><stop offset=".3" stop-color="#3a1e06"/><stop offset=".55" stop-color="#6a4420"/><stop offset=".78" stop-color="#a07850"/><stop offset=".87" stop-color="#c4a07a"/><stop offset=".93" stop-color="#a07048"/><stop offset="1" stop-color="#7a4c24"/></linearGradient></defs><path d="M60.0 15.0 L186.0 30.0 Q252.0 50.0 275.0 91.0 Q300.0 130.0 298.0 175.0 Q297.0 205.0 287.0 223.0 L278.6 233.0 Q262.0 253.0 243.4 268.0 Q238.0 230.0 224.0 215.0 Q210.0 190.0 186.0 175.0 L60.0 160.0 Z" fill="#532a02"/><path d="M60.0 302.0 L186.0 289.0 Q220.0 282.0 243.4 268.0 Q270.0 248.0 287.0 223.0 Q265.0 272.0 250.4 305.0 Q230.0 355.0 202.9 380.8 Q180.0 400.0 159.0 406.0 Q119.0 416.0 71.0 406.0 L60.0 400.0 Z" fill="url(#fr)"/><path d="M186.0 30.0 Q252.0 50.0 275.0 91.0 Q300.0 130.0 298.0 175.0 Q297.0 205.0 287.0 223.0" fill="none" stroke="#18e8f0" stroke-width="1.6"/><path d="M186.0 175.0 Q210.0 190.0 224.0 215.0 Q238.0 230.0 243.4 268.0" fill="none" stroke="#18e8f0" stroke-width="1.3"/><path d="M120.0 298.0 L186.0 289.0 Q220.0 282.0 243.4 268.0 Q270.0 248.0 287.0 223.0" fill="none" stroke="#18e8f0" stroke-width="1.5"/><path d="M220.5 365.0 Q212.0 374.0 202.9 380.8 Q180.0 400.0 159.0 406.0 Q119.0 416.0 71.0 406.0" fill="none" stroke="#18e8f0" stroke-width="1.1"/><path d="M239.0 141.0 L260.0 126.0" stroke="#20e0e8" stroke-width="3.2" stroke-linecap="round"/><path d="M253.0 121.0 L271.0 116.0 L263.0 132.0 Z" fill="#20e0e8"/></svg>
<svg class="a" style="left:244px;top:948px;" width="40" height="52" viewBox="0 0 40 52"><text x="5" y="10" font-size="8" fill="#e02020" font-family="Liberation Sans">X</text><text x="29" y="19" font-size="8" fill="#2020e0" font-family="Liberation Sans">Z</text><text x="2" y="47" font-size="8" fill="#20c020" font-family="Liberation Sans">Y</text><path d="M20 27 L13 20" stroke="#e08080" stroke-width="2"/><path d="M10 16 L16 20 L13 23 Z" fill="#901010"/><circle cx="21" cy="26" r="3" fill="#6a80e0"/><path d="M19 29 L10 38" stroke="#60d060" stroke-width="2"/><path d="M7 42 L10 35 L13 38 Z" fill="#40c040"/></svg>
<div class="a" style="left:1614px;top:181px;width:306px;height:835px;background:#e6e6e6"></div>
<div class="a" style="left:1617px;top:200px;width:2px;height:815px;background:#d4d4d4"></div>
<div class="t " style="left:1625px;top:185px;font-size:12px;color:#333">设计元素库</div>
<div class="a" style="left:1867px;top:189.5px;width:0;height:0;border-left:5px solid transparent;border-right:5px solid transparent;border-top:5px solid #555"></div>
<svg class="a" style="left:1885px;top:185px;" width="10" height="12" viewBox="0 0 10 12"><path d="M2 1 H8 M3 1 V6 H7 V1 M1 6 H9 M5 6 V11" stroke="#555" stroke-width="1.2" fill="none"/></svg>
<svg class="a" style="left:1904px;top:187px;" width="10" height="10" viewBox="0 0 10 10"><path d="M1 1 L8 8 M8 1 L1 8" stroke="#555" stroke-width="1.3"/></svg>
<div class="a" style="left:1622px;top:205px;width:71px;height:18px;background:linear-gradient(#fafafa,#e8e8e8 50%,#d8d8d8);border:1px solid #8a8a8a;border-radius:3px"></div>
<svg class="a" style="left:1628px;top:207px;" width="14" height="14" viewBox="0 0 14 14"><rect x="1" y="1" width="11" height="12" fill="#fff" stroke="#333"/><rect x="3" y="3" width="2.5" height="2.5" fill="#333"/><rect x="7" y="3" width="2.5" height="2.5" fill="#333"/><rect x="3" y="8" width="2.5" height="2.5" fill="#333"/><rect x="7" y="8" width="2.5" height="2.5" fill="#333"/></svg>
<div class="t " style="left:1655px;top:208px;font-size:12px;color:#111">新建</div>
<div class="a" style="left:1697px;top:205px;width:71px;height:18px;background:linear-gradient(#fafafa,#e8e8e8 50%,#d8d8d8);border:1px solid #8a8a8a;border-radius:3px"></div>
<svg class="a" style="left:1702px;top:206px;" width="16" height="16" viewBox="0 0 16 16"><path d="M2 1 L8 3 V15 L2 13 Z" fill="#ccc" stroke="#555" stroke-width=".8"/><rect x="8" y="2" width="5" height="11" fill="#f4f4f4" stroke="#555" stroke-width=".8"/></svg>
<div class="t " style="left:1730px;top:208px;font-size:12px;color:#111">打开</div>
<div class="a" style="left:1771px;top:205px;width:71px;height:18px;background:linear-gradient(#fafafa,#e8e8e8 50%,#d8d8d8);border:1px solid #8a8a8a;border-radius:3px"></div>
<svg class="a" style="left:1776px;top:206px;" width="16" height="16" viewBox="0 0 16 16"><rect x="1" y="7" width="8" height="8" fill="#556633" stroke="#222" stroke-width=".8"/><rect x="6" y="1" width="9" height="10" fill="#eee" stroke="#555" stroke-width=".8"/></svg>
<div class="t " style="left:1804px;top:208px;font-size:12px;color:#111">保存</div>
<div class="a" style="left:1845px;top:205px;width:71px;height:18px;background:linear-gradient(#fafafa,#e8e8e8 50%,#d8d8d8);border:1px solid #8a8a8a;border-radius:3px"></div>
<svg class="a" style="left:1850px;top:206px;" width="16" height="16" viewBox="0 0 16 16"><rect x="2" y="1" width="10" height="13" fill="#ddd" stroke="#555" stroke-width=".8"/><path d="M12 10 l2 2 l-2 2" stroke="#555" fill="none"/></svg>
<div class="t " style="left:1878px;top:208px;font-size:12px;color:#111">关闭</div>
<div class="a" style="left:1620px;top:224px;width:298px;height:20px;background:#fff"></div>
<div class="a" style="left:1622px;top:225px;width:18px;height:18px;background:#eee;border:1px solid #bbb"></div>
<svg class="a" style="left:1624px;top:228px;" width="14" height="12" viewBox="0 0 14 12"><path d="M1 6 L7 1 V4 H13 V8 H7 V11 Z" fill="#aaa"/></svg>
<div class="t " style="left:1641px;top:227px;font-size:12px;color:#444">搜索...</div>
<div class="a" style="left:1901px;top:226px;width:18px;height:17px;background:#eee;border:1px solid #888;border-radius:2px"></div>
<svg class="a" style="left:1902px;top:227px;" width="16" height="15" viewBox="0 0 16 15"><path d="M3 2 L13 13 M13 2 L3 13" stroke="#d42020" stroke-width="1.8"/></svg>
<div class="a" style="left:1621px;top:244px;width:297px;height:749px;background:#fff;border:1px solid #a8a8a8;border-bottom:1px solid #8a8a8a"></div>
<div class="t " style="left:1622.0px;width:90px;text-align:center;top:302px;font-size:12px;color:#111">水箱外壳</div>
<div class="t " style="left:1713.0px;width:90px;text-align:center;top:302px;font-size:12px;color:#111">水箱环</div>
<div class="t " style="left:1804.0px;width:90px;text-align:center;top:302px;font-size:12px;color:#111">水箱盖</div>
<div class="t " style="left:1622.0px;width:90px;text-align:center;top:392px;font-size:12px;color:#111">水箱底</div>
<div class="t " style="left:1713.0px;width:90px;text-align:center;top:392px;font-size:12px;color:#111">锥形底</div>
<div class="t " style="left:1804.0px;width:90px;text-align:center;top:392px;font-size:12px;color:#111">管洞</div>
<div class="t " style="left:1622.0px;width:90px;text-align:center;top:483px;font-size:12px;color:#111">管</div>
<div class="t " style="left:1713.0px;width:90px;text-align:center;top:483px;font-size:12px;color:#111">弯头</div>
<div class="t " style="left:1804.0px;width:90px;text-align:center;top:483px;font-size:12px;color:#111">高颈法兰</div>
<div class="t " style="left:1622.0px;width:90px;text-align:center;top:574px;font-size:12px;color:#111">活套法兰</div>
<div class="t " style="left:1713.0px;width:90px;text-align:center;top:574px;font-size:12px;color:#111">腿</div>
<div class="t " style="left:1804.0px;width:90px;text-align:center;top:574px;font-size:12px;color:#111">基垫</div>
<svg class="a" style="left:1640px;top:245px;" width="280" height="345" viewBox="0 0 280 345"><defs><linearGradient id="gm" x1="0" x2="1"><stop offset="0" stop-color="#7c848c"/><stop offset=".35" stop-color="#c8ced4"/><stop offset=".6" stop-color="#9aa2aa"/><stop offset="1" stop-color="#6c747c"/></linearGradient></defs><path d="M14 13 L40 13 L39 42 Q27 47 15 42 Z" fill="url(#gm)"/><ellipse cx="27" cy="14" rx="13" ry="4" fill="#b8bec4" stroke="#8a9096" stroke-width=".8"/><ellipse cx="119" cy="25.6" rx="16.5" ry="12.5" fill="none" stroke="#9aa2aa" stroke-width="2"/><ellipse cx="210" cy="25" rx="18" ry="13.4" fill="#9ca4ac"/><circle cx="210" cy="25" r="1" fill="#fff"/><ellipse cx="28" cy="119" rx="23" ry="18" fill="#9ca4ac"/><ellipse cx="28" cy="119" rx="2" ry="1.4" fill="#fff"/><path d="M101 114 Q118 104 135.7 114 L118 127 Z" fill="url(#gm)"/><path d="M209.3 101 L227 115 L209.3 129 L191.6 115 Z" fill="#3c3c8a"/><path d="M209.3 112 L227 124 L209.3 136.2 L191.6 124 Z" fill="#3c3c8a"/><ellipse cx="209.3" cy="114" rx="7" ry="5.5" fill="url(#gm)"/><ellipse cx="209.3" cy="119" rx="6" ry="2" fill="#eee"/><path d="M16 195 L40 195 L39.5 223 Q28 229 16.5 223 Z" fill="url(#gm)"/><ellipse cx="28" cy="195.5" rx="12" ry="4" fill="#c8ced4" stroke="#8a9096" stroke-width=".7"/><path d="M104 191 Q136 193 137 223 L122 223 Q120 210 104 208 Z" fill="url(#gm)"/><ellipse cx="211" cy="214" rx="19.8" ry="10" fill="#a0a8b0"/><path d="M199 214 V199 Q211 193 223 199 V214 Q211 219 199 214 Z" fill="url(#gm)"/><ellipse cx="211" cy="199" rx="12" ry="5" fill="#e4e8ec" stroke="#8a9096" stroke-width=".8"/><ellipse cx="28" cy="299" rx="20" ry="13.9" fill="url(#gm)"/><ellipse cx="28" cy="297" rx="11" ry="6.5" fill="#fff" stroke="#7c848c" stroke-width="1"/><path d="M111 284 V307 M114 290 V317 M117 280 V302 M126 281 V307 M123 289 V318 M130 285 V309" stroke="#8a9298" stroke-width="1.6"/><path d="M209.6 286 L227.4 299 L209.6 312 L191.8 299 Z" fill="#d4d8dc" stroke="#a8aeb4" stroke-width=".8"/></svg>
<div class="a" style="left:1621px;top:992px;width:35px;height:23px;background:#fcfcfc;border:1px solid #c8c8c8;border-top:none"></div>
<div class="t " style="left:1627px;top:997px;font-size:12px;color:#333">水箱</div>
<div class="t " style="left:1664px;top:997px;font-size:12px;color:#333">工具</div>
<div class="t " style="left:1700px;top:997px;font-size:12px;color:#333">关节件</div>
<div class="t " style="left:1749px;top:997px;font-size:12px;color:#333">钢结构</div>
<div class="t " style="left:1799px;top:997px;font-size:12px;color:#333">纹理</div>
<div class="t " style="left:1835px;top:997px;font-size:12px;color:#333">表面光泽</div>
<svg class="a" style="left:1905px;top:998px;" width="12" height="10" viewBox="0 0 12 10"><path d="M1 1 H11 M1 4 H11 L6 9 Z" stroke="#777" fill="#777" stroke-width="1"/></svg>
<div class="a" style="left:0px;top:1015px;width:1920px;height:25px;background:#f0f0f0;border-top:1px solid #dadada"></div>
<div class="t " style="left:2px;top:1021px;font-size:12px;color:#222">帮助,按F1键</div>
<div class="t " style="left:1065px;top:1021px;font-size:12px;color:#333;letter-spacing:-0.15px">视图尺寸: 1382 x 813</div>
<div class="t " style="left:1203px;top:1021px;font-size:12px;color:#333">单位: mm, deg</div>
<svg class="a" style="left:1296px;top:1020px;" width="17" height="17" viewBox="0 0 17 17"><circle cx="7" cy="7" r="5.5" fill="#fff" stroke="#333" stroke-width="1.3"/><rect x="4.5" y="4" width="4" height="5" fill="none" stroke="#333"/><path d="M11 11 L16 16" stroke="#333" stroke-width="2.2"/></svg>
<svg class="a" style="left:1319px;top:1020px;" width="17" height="17" viewBox="0 0 17 17"><circle cx="7" cy="7" r="5.5" fill="#fff" stroke="#333" stroke-width="1.3"/><rect x="4.5" y="4.5" width="5" height="5" fill="none" stroke="#333"/><path d="M11 11 L16 16" stroke="#333" stroke-width="2.2"/></svg>
<div class="a" style="left:1342px;top:1026.5px;width:0;height:0;border-left:3px solid transparent;border-right:3px solid transparent;border-top:3px solid #333"></div>
<svg class="a" style="left:1354px;top:1021px;" width="16" height="14" viewBox="0 0 16 14"><path d="M1 5 H10 V13 H1 Z" fill="#f8e060" stroke="#222"/><path d="M1 5 L4 2 H13 L10 5 Z M10 5 L13 2 V10 L10 13 Z" fill="#6888c0" stroke="#222" stroke-width=".8"/><path d="M11 6 H16 M13.5 3.5 V8.5" stroke="#e00" stroke-width="1.2"/></svg>
<div class="a" style="left:1377px;top:1026.5px;width:0;height:0;border-left:3px solid transparent;border-right:3px solid transparent;border-top:3px solid #333"></div>
<svg class="a" style="left:1389px;top:1020px;" width="17" height="17" viewBox="0 0 17 17"><path d="M1 5 H12 V16 H1 Z" fill="#4a78b8" stroke="#2a4a80"/><path d="M1 5 L5 1 H16 L12 5 Z M12 5 L16 1 V12 L12 16 Z" fill="#b8d0f0" stroke="#2a4a80" stroke-width=".8"/></svg>
<div class="a" style="left:1412px;top:1026.5px;width:0;height:0;border-left:3px solid transparent;border-right:3px solid transparent;border-top:3px solid #333"></div>
<svg class="a" style="left:1424px;top:1020px;" width="17" height="17" viewBox="0 0 17 17"><circle cx="8" cy="6" r="4" fill="#5aa0e0" stroke="#333"/><rect x="6" y="9" width="8" height="7" fill="#eee" stroke="#333"/><path d="M1 7 L3 5 M1 7 L3 9" stroke="#333"/></svg>
<div class="a" style="left:1448px;top:1026.5px;width:0;height:0;border-left:3px solid transparent;border-right:3px solid transparent;border-top:3px solid #333"></div>
<svg class="a" style="left:1459px;top:1020px;" width="17" height="17" viewBox="0 0 17 17"><path d="M1 9 L11 2 H16 L14 9 L5 16 H1 Z" fill="#4a80c0" stroke="#2a4a80"/></svg>
<svg class="a" style="left:1483px;top:1020px;" width="17" height="17" viewBox="0 0 17 17"><circle cx="4.5" cy="11" r="3.5" fill="#cde" stroke="#345" stroke-width="1.3"/><circle cx="12.5" cy="11" r="3.5" fill="#cde" stroke="#345" stroke-width="1.3"/><path d="M1 11 L5 2 M16 11 L14 3" stroke="#345" stroke-width="1.2"/></svg>
<div class="a" style="left:1502px;top:1026.5px;width:0;height:0;border-left:3px solid transparent;border-right:3px solid transparent;border-top:3px solid #333"></div>
<div class="a" style="left:1512px;top:1019px;width:31px;height:19px;background:#cfcfcf"></div>
<svg class="a" style="left:1515px;top:1020px;" width="17" height="17" viewBox="0 0 17 17"><path d="M1 5 H12 V16 H1 Z" fill="#a8c8f0" stroke="#333"/><path d="M1 5 L5 1 H16 L12 5 Z M12 5 L16 1 V12 L12 16 Z" fill="#d8e8f8" stroke="#333" stroke-width=".8"/></svg>
<div class="a" style="left:1534px;top:1025.5px;width:0;height:0;border-left:3px solid transparent;border-right:3px solid transparent;border-top:3px solid #333"></div>
<svg class="a" style="left:1548px;top:1020px;" width="17" height="17" viewBox="0 0 17 17"><path d="M2 8 L5 5 H13 V12 L10 15 H2 Z" fill="#2a68d0" stroke="#113"/><path d="M5 4 L8 1 H15 V7 L13 9" fill="#3a88e0" stroke="#113"/></svg>
<div class="a" style="left:1567px;top:1026.5px;width:0;height:0;border-left:3px solid transparent;border-right:3px solid transparent;border-top:3px solid #333"></div>
<svg class="a" style="left:1580px;top:1020px;" width="18" height="18" viewBox="0 0 18 18"><path d="M1 12 V6 H8 V3 L12 7 L8 11 V8 H3 V12 Z" fill="#bbb"/><path d="M11 8 V17 L13 15 L15 18 L16 17 L14 14 H17 Z" fill="#fff" stroke="#999"/></svg>
<div class="a" style="left:1601px;top:1019px;width:26px;height:19px;background:#cfcfcf"></div>
<svg class="a" style="left:1607px;top:1020px;" width="14" height="18" viewBox="0 0 14 18"><path d="M2 1 V14 L5 11 L8 17 L10 16 L7 10 H12 Z" fill="#fff" stroke="#111" stroke-width="1.1"/></svg>
<svg class="a" style="left:1629px;top:1021px;" width="18" height="17" viewBox="0 0 18 17"><rect x="1" y="2" width="11" height="6" fill="#fff" stroke="#ccc"/><path d="M8 5 V16 L10 14 L12 17 L13 16 L11 13 H14 Z" fill="#fff" stroke="#111"/></svg>
<div class="a" style="left:1650px;top:1019px;width:89px;height:20px;background:#e4e4e4;border:1px solid #b8b8b8"></div>
<div class="t " style="left:1653px;top:1023px;font-size:12px;color:#aaa">缺省</div>
<div class="a" style="left:1726px;top:1027.5px;width:0;height:0;border-left:3px solid transparent;border-right:3px solid transparent;border-top:3px solid #aaa"></div>
<div class="a" style="left:1740px;top:1019px;width:88px;height:20px;background:#fafafa;border:1px solid #d0d0d0"></div>
<div class="t " style="left:1743px;top:1023px;font-size:12px;color:#222">任意</div>
<div class="a" style="left:1815px;top:1027.5px;width:0;height:0;border-left:3px solid transparent;border-right:3px solid transparent;border-top:3px solid #444"></div>
<div class="a" style="left:1830px;top:1019px;width:64px;height:20px;background:#fafafa;border:1px solid #d0d0d0"></div>
<div class="t " style="left:1833px;top:1023px;font-size:12px;color:#222">缺省</div>
<div class="a" style="left:1881px;top:1027.5px;width:0;height:0;border-left:3px solid transparent;border-right:3px solid transparent;border-top:3px solid #444"></div>
<svg class="a" style="left:1897px;top:1020px;" width="18" height="16" viewBox="0 0 18 16"><rect x="6" y="1" width="6" height="5" fill="#e01010" stroke="#333" stroke-width=".6"/><path d="M9 6 V8 M3 8 H15 M3 8 V10 M15 8 V10" stroke="#2060c0" stroke-width="1.2"/><rect x="1" y="10" width="6" height="5" fill="#8ab0e0" stroke="#333" stroke-width=".6"/><rect x="11" y="10" width="6" height="5" fill="#f0e050" stroke="#333" stroke-width=".6"/></svg>
<div class="a" style="left:0;top:1040px;width:1920px;height:40px;background:linear-gradient(90deg,#8e5850 0px,#8e5850 1555px,#6c403c 1592px,#6c403c 1920px);border-top:1px solid #3c2a28"></div>
<div class="a" style="left:0;top:1041px;width:1920px;height:2px;background:rgba(255,255,255,.12)"></div>
<svg class="a" style="left:7px;top:1041px;" width="40" height="40" viewBox="0 0 40 40"><defs><radialGradient id="orb" cx=".5" cy=".4" r=".6"><stop offset="0" stop-color="#5aa8e0"/><stop offset=".55" stop-color="#1a5aa0"/><stop offset=".85" stop-color="#0c3a78"/><stop offset="1" stop-color="#40b8f0"/></radialGradient><linearGradient id="orbh" x1="0" y1="0" x2="0" y2="1"><stop offset="0" stop-color="#fff" stop-opacity=".6"/><stop offset="1" stop-color="#fff" stop-opacity="0"/></linearGradient></defs><circle cx="20" cy="19.5" r="18" fill="url(#orb)" stroke="#1a3050" stroke-width="1"/><path d="M10 13 Q14.5 10.5 19 13 L18 19.5 Q13.5 17.5 9 19.5 Z" fill="#f06020"/><path d="M20.5 13 Q25 10.5 29.5 12.5 L28.5 19 Q24 17 19.5 19.5 Z" fill="#80c020"/><path d="M8.8 21 Q13.3 19 17.8 21 L16.8 27.5 Q12.3 25.5 7.8 27.5 Z" fill="#30a8f0"/><path d="M19.3 21 Q23.8 18.5 28.3 20.5 L27.3 27 Q22.8 25 18.3 27.5 Z" fill="#f8c020"/><ellipse cx="20" cy="12" rx="12" ry="8" fill="url(#orbh)"/></svg>
<div class="a" style="left:183px;top:1042px;width:51px;height:37px;background:linear-gradient(rgba(255,255,255,.30),rgba(255,255,255,.10) 45%,rgba(255,255,255,.06));border:1px solid rgba(40,20,20,.55);border-radius:3px;box-shadow:inset 0 0 0 1px rgba(255,255,255,.25)"></div>
<div class="a" style="left:308px;top:1042px;width:58px;height:37px;background:linear-gradient(rgba(255,255,255,.30),rgba(255,255,255,.10) 45%,rgba(255,255,255,.06));border:1px solid rgba(40,20,20,.55);border-radius:3px;box-shadow:inset 0 0 0 1px rgba(255,255,255,.25)"></div>
<div class="a" style="left:556px;top:1042px;width:53px;height:37px;background:linear-gradient(rgba(255,255,255,.30),rgba(255,255,255,.10) 45%,rgba(255,255,255,.06));border:1px solid rgba(40,20,20,.55);border-radius:3px;box-shadow:inset 0 0 0 1px rgba(255,255,255,.25)"></div>
<div class="a" style="left:618px;top:1042px;width:58px;height:37px;background:linear-gradient(rgba(255,255,255,.30),rgba(255,255,255,.10) 45%,rgba(255,255,255,.06));border:1px solid rgba(40,20,20,.55);border-radius:3px;box-shadow:inset 0 0 0 1px rgba(255,255,255,.25)"></div>
<div class="a" style="left:680px;top:1042px;width:58px;height:37px;background:linear-gradient(rgba(255,255,255,.30),rgba(255,255,255,.10) 45%,rgba(255,255,255,.06));border:1px solid rgba(40,20,20,.55);border-radius:3px;box-shadow:inset 0 0 0 1px rgba(255,255,255,.25)"></div>
<div class="a" style="left:742px;top:1042px;width:58px;height:37px;background:linear-gradient(rgba(255,255,255,.30),rgba(255,255,255,.10) 45%,rgba(255,255,255,.06));border:1px solid rgba(40,20,20,.55);border-radius:3px;box-shadow:inset 0 0 0 1px rgba(255,255,255,.25)"></div>
<div class="a" style="left:804px;top:1042px;width:58px;height:37px;background:linear-gradient(rgba(255,255,255,.30),rgba(255,255,255,.10) 45%,rgba(255,255,255,.06));border:1px solid rgba(40,20,20,.55);border-radius:3px;box-shadow:inset 0 0 0 1px rgba(255,255,255,.25)"></div>
<div class="a" style="left:866px;top:1042px;width:58px;height:37px;background:linear-gradient(rgba(255,255,255,.42),rgba(255,255,255,.18) 45%,rgba(255,255,255,.10));border:1px solid rgba(40,20,20,.55);border-radius:3px;box-shadow:inset 0 0 0 1px rgba(255,255,255,.25)"></div>
<svg class="a" style="left:70px;top:1043px;" width="38" height="36" viewBox="0 0 38 36"><defs><radialGradient id="ieg" cx=".4" cy=".35" r=".7"><stop offset="0" stop-color="#a8e8ff"/><stop offset=".6" stop-color="#2aa0e8"/><stop offset="1" stop-color="#1060b0"/></radialGradient></defs><path d="M20 8 C28 8 33 13 33 20 V22 H14 C14.5 26 17 28 21 28 C24 28 26 27 28 25 L32 28 C29 31.5 25.5 33 20.5 33 C12.5 33 7 27.5 7 20.5 C7 13 12.5 8 20 8 Z M14 17.5 H26.5 C26 14.5 23.5 12.5 20.2 12.5 C17 12.5 14.7 14.5 14 17.5 Z" fill="url(#ieg)" stroke="#0c4a90" stroke-width=".8"/><path d="M5.2 30.6 A18 6.5 -40 0 1 32.8 7.4" fill="none" stroke="#f0c018" stroke-width="2.4"/><path d="M32.8 7.4 A18 6.5 -40 0 1 27 17" fill="none" stroke="#f0c018" stroke-width="2.2"/></svg>
<svg class="a" style="left:134px;top:1046px;" width="30" height="28" viewBox="0 0 30 28"><rect x="3" y="2" width="24" height="24" rx="3" fill="#7ab8e0" stroke="#cde" /><circle cx="15" cy="14" r="8" fill="#f07020" stroke="#fff" stroke-width="1.5"/><path d="M12 9 L20 14 L12 19 Z" fill="#fff"/></svg>
<svg class="a" style="left:192px;top:1046px;" width="32" height="28" viewBox="0 0 32 28"><path d="M2 6 H12 L14 8 H30 V26 H2 Z" fill="#e8c860"/><path d="M2 12 H30 V26 H2 Z" fill="#f8e4a0"/><path d="M10 18 H22 V26 H19 V21 H13 V26 H10 Z" fill="#5aa8e0"/></svg>
<svg class="a" style="left:258px;top:1043px;" width="34" height="34" viewBox="0 0 34 34"><circle cx="12" cy="12" r="9" fill="#e02020"/><circle cx="12" cy="12" r="3.5" fill="#f8a0a0"/><rect x="15" y="16" width="13" height="15" fill="#eef" stroke="#336"/><path d="M18 20 H26 M18 23 H26 M18 26 H26" stroke="#336"/></svg>
<svg class="a" style="left:320px;top:1044px;" width="32" height="32" viewBox="0 0 32 32"><ellipse cx="15" cy="17" rx="13" ry="10" fill="#e8f0f8" stroke="#8aa"/><circle cx="10" cy="14" r="2.5" fill="#e03030"/><circle cx="15" cy="11" r="2.5" fill="#f0c020"/><circle cx="20" cy="14" r="2.5" fill="#30a040"/><path d="M14 28 L30 4" stroke="#d08030" stroke-width="2.5"/></svg>
<svg class="a" style="left:382px;top:1045px;" width="32" height="32" viewBox="0 0 32 32"><path d="M2 6 L16 1 L30 6 V26 L16 31 L2 26 Z" fill="#c81818"/><text x="9" y="21" font-size="14" font-weight="bold" fill="#fff" font-family="Liberation Sans">S</text><text x="17" y="18" font-size="11" font-weight="bold" fill="#fff" font-family="Liberation Sans">W</text><text x="9" y="30" font-size="8" font-weight="bold" fill="#fff" stroke="#000" stroke-width=".3" font-family="Liberation Sans">2016</text></svg>
<svg class="a" style="left:446px;top:1045px;" width="30" height="28" viewBox="0 0 30 28"><rect x="1" y="1" width="28" height="26" fill="#0a4a9a" stroke="#3a8ae0"/><text x="5" y="19" font-size="14" font-weight="bold" fill="#9ad0ff" font-family="Liberation Sans">Ps</text></svg>
<svg class="a" style="left:506px;top:1044px;" width="32" height="32" viewBox="0 0 32 32"><circle cx="16" cy="16" r="14" fill="#f0a020"/><path d="M16 2 A14 14 0 0 1 30 16 L16 16 Z" fill="#e03040"/><path d="M2 16 A14 14 0 0 1 16 2 L16 16 Z" fill="#a040e0"/><path d="M16 30 A14 14 0 0 1 2 16 L16 16 Z" fill="#30b050"/><path d="M16 16 L30 16 A14 14 0 0 1 16 30 Z" fill="#f8d020"/><circle cx="16" cy="16" r="2.5" fill="#fff"/></svg>
<svg class="a" style="left:568px;top:1046px;" width="28" height="28" viewBox="0 0 28 28"><rect x="1" y="1" width="26" height="26" fill="#d84820" stroke="#a03010"/><rect x="4" y="4" width="20" height="20" fill="#f8e0d0"/><circle cx="11" cy="14" r="4" fill="#e06030"/><path d="M17 11 H22 M17 14 H22 M17 17 H22" stroke="#333"/></svg>
<svg class="a" style="left:630px;top:1045px;" width="34" height="30" viewBox="0 0 34 30"><ellipse cx="13" cy="12" rx="11" ry="9" fill="#5ac040"/><ellipse cx="22" cy="19" rx="10" ry="8" fill="#f4f4f4" stroke="#ccc"/><circle cx="9" cy="11" r="1.3" fill="#222"/><circle cx="16" cy="11" r="1.3" fill="#222"/><circle cx="19" cy="18" r="1.1" fill="#555"/><circle cx="25" cy="18" r="1.1" fill="#555"/></svg>
<svg class="a" style="left:693px;top:1045px;" width="30" height="30" viewBox="0 0 30 30"><circle cx="15" cy="15" r="13" fill="#2a50b8" stroke="#112a70"/><path d="M8 5 Q18 15 10 27 M22 4 Q12 15 20 27" stroke="#fff" stroke-width="2.5" fill="none"/></svg>
<svg class="a" style="left:753px;top:1046px;" width="34" height="28" viewBox="0 0 34 28"><path d="M2 10 L10 4 L14 22 L6 26 Z" fill="#30c030" stroke="#108010"/><path d="M10 10 L18 6 L20 22 L14 24 Z" fill="#20a020" stroke="#108010"/><circle cx="27" cy="8" r="5" fill="none" stroke="#30c030" stroke-width="2.5"/><path d="M20 16 L25 11" stroke="#30c030" stroke-width="2.5"/></svg>
<svg class="a" style="left:816px;top:1045px;" width="34" height="30" viewBox="0 0 34 30"><rect x="3" y="3" width="28" height="24" fill="#60a0d8" stroke="#2a70c0" stroke-width="2"/><path d="M3 18 Q12 10 20 16 T31 14 V27 H3 Z" fill="#3a8a50"/><rect x="3" y="3" width="28" height="8" fill="#a8d0f0"/></svg>
<svg class="a" style="left:878px;top:1044px;" width="34" height="32" viewBox="0 0 34 32"><path d="M16 2 L30 9 V14 L16 7 L8 11 L16 15 L30 9 V23 L16 30 L2 23 V17 L16 24 L24 20 L16 16 L2 23 V9 Z" fill="#3a40e0" stroke="#b8c0ff" stroke-width="1.2"/></svg>
<svg class="a" style="left:1598px;top:1050px;" width="16" height="16" viewBox="0 0 16 16"><rect x="0" y="0" width="16" height="16" rx="2" fill="#f06020" stroke="#fff" stroke-width=".5"/><text x="3.5" y="13" font-size="13" font-weight="bold" fill="#fff" font-family="Liberation Sans">S</text></svg>
<svg class="a" style="left:1621px;top:1050px;" width="17" height="17" viewBox="0 0 17 17"><circle cx="8.5" cy="8.5" r="7.5" fill="#1a3ab8" stroke="#cce"/><text x="5" y="13" font-size="11" font-weight="bold" fill="#fff" font-family="Liberation Sans">?</text></svg>
<svg class="a" style="left:1645px;top:1049px;" width="12" height="20" viewBox="0 0 12 20"><rect x="1" y="3" width="7" height="5" fill="none" stroke="#fff"/><rect x="4" y="1" width="7" height="5" fill="#8a5a52" stroke="#fff"/><path d="M3 13 L9 13 L6 17 Z" fill="#fff"/></svg>
<svg class="a" style="left:1663px;top:1055px;" width="12" height="10" viewBox="0 0 12 10"><path d="M1 8 L6 3 L11 8 Z" fill="#fff"/></svg>
<svg class="a" style="left:1685px;top:1050px;" width="17" height="19" viewBox="0 0 17 19"><path d="M8.5 1 L16 4 V10 Q16 16 8.5 18 Q1 16 1 10 V4 Z" fill="#30a040" stroke="#eee"/><path d="M10 4 L6 10 H9 L7 15 L12 8 H9 Z" fill="#fff"/></svg>
<svg class="a" style="left:1708px;top:1050px;" width="18" height="18" viewBox="0 0 18 18"><circle cx="9" cy="9" r="8" fill="#e8c820" stroke="#6a8a20"/><path d="M9 4 V14 M4 9 H14" stroke="#207a20" stroke-width="3"/></svg>
<svg class="a" style="left:1732px;top:1050px;" width="18" height="18" viewBox="0 0 18 18"><circle cx="9" cy="9" r="8" fill="#1a30c0" stroke="#aab"/><path d="M7 3 Q14 9 7 15" stroke="#fff" stroke-width="2" fill="none"/></svg>
<svg class="a" style="left:1756px;top:1049px;" width="18" height="19" viewBox="0 0 18 19"><path d="M2 1 V18" stroke="#fff" stroke-width="1.5"/><path d="M3 2 H12 L10 5 L12 8 H3 Z" fill="#fff"/><circle cx="13" cy="13" r="4.5" fill="#e02020"/><path d="M11 11 L15 15 M15 11 L11 15" stroke="#fff" stroke-width="1.3"/></svg>
<svg class="a" style="left:1781px;top:1050px;" width="18" height="18" viewBox="0 0 18 18"><rect x="3" y="1" width="4" height="8" fill="none" stroke="#fff"/><rect x="2" y="9" width="14" height="6" fill="none" stroke="#fff" stroke-width="1.3"/><path d="M6 16 H12" stroke="#fff"/></svg>
<svg class="a" style="left:1804px;top:1051px;" width="18" height="16" viewBox="0 0 18 16"><path d="M1 5 H5 L10 1 V15 L5 11 H1 Z" fill="#fff"/><path d="M12 4 Q15 8 12 12 M14 2 Q18 8 14 14" stroke="#fff" fill="none"/></svg>
<div class="t " style="left:1852px;top:1045px;font-size:12px;color:#fff">16:41</div>
<div class="t " style="left:1837px;top:1063px;font-size:12px;color:#fff;letter-spacing:0.8px">2019/11/5</div>
<div class="a" style="left:1905px;top:1041px;width:15px;height:39px;background:linear-gradient(90deg,rgba(255,255,255,.1),rgba(255,255,255,.25));border-left:1px solid rgba(0,0,0,.4)"></div>
<div class="a" style="left:555px;top:195px;width:810px;height:650px;border-radius:7px 7px 6px 6px;box-shadow:3px 5px 14px 3px rgba(0,0,0,.55)"></div>
<div class="a" style="left:555px;top:195px;width:810px;height:650px;border-radius:7px 7px 6px 6px;border:1px solid #262a30;background:linear-gradient(#c2d6ea 0px,#c2d6ea 178px,#7898c0 188px,#7c9cc4 360px,#94b4d6 560px,#9ec2ea 650px)"></div>
<div class="a" style="left:556px;top:196px;width:808px;height:28px;border-radius:6px 6px 0 0;background:linear-gradient(90deg,#c8d8ea 0px,#b4c8de 60px,#7090b6 120px,#4a6e98 175px,#4a6e98 630px,#7a98bc 700px,#94b0cc 750px,#90acc8 808px)"></div>
<div class="a" style="left:556px;top:196px;width:808px;height:6px;border-radius:6px 6px 0 0;background:linear-gradient(rgba(190,215,240,.8),rgba(190,215,240,0))"></div>
<div class="a" style="left:556px;top:224px;width:808px;height:1px;background:rgba(255,255,255,.35)"></div>
<div class="a" style="left:1240px;top:838px;width:118px;height:7px;background:linear-gradient(90deg,rgba(40,30,25,0),rgba(40,30,25,.9) 30%,rgba(40,30,25,.9) 78%,rgba(120,130,150,.4) 100%)"></div>
<div class="t " style="left:563px;top:203px;font-size:12px;color:#000">编辑变型设计</div>
<div class="a" style="left:1312px;top:196px;width:47px;height:19px;border:1px solid #5a1a10;border-top:none;border-radius:0 0 4px 4px;background:linear-gradient(#e8a090,#d27060 45%,#b83020 50%,#c04830 80%,#d07060);box-shadow:inset 0 0 0 1px rgba(255,255,255,.35)"></div>
<svg class="a" style="left:1329px;top:199px;" width="14" height="12" viewBox="0 0 14 12"><path d="M2.5 2 L11.5 10 M11.5 2 L2.5 10" stroke="#4a3a3a" stroke-width="4.2"/><path d="M2.5 2 L11.5 10 M11.5 2 L2.5 10" stroke="#fff" stroke-width="2.6"/></svg>
<div class="a" style="left:562px;top:223px;width:797px;height:615px;background:#f0f0f0;border:1px solid #6c86a4"></div>
<div class="a" style="left:576px;top:233px;width:73px;height:21px;background:linear-gradient(#f4f4f4,#ececec 48%,#dcdcdc 52%,#d0d0d0);border:1px solid #707070;border-radius:3px;box-shadow:inset 0 0 0 1px rgba(255,255,255,.7)"></div>
<div class="t " style="left:576.0px;width:73px;text-align:center;top:237.5px;font-size:12px;color:#000">添加...</div>
<div class="a" style="left:654px;top:233px;width:73px;height:21px;background:linear-gradient(#f4f4f4,#ececec 48%,#dcdcdc 52%,#d0d0d0);border:1px solid #707070;border-radius:3px;box-shadow:inset 0 0 0 1px rgba(255,255,255,.7)"></div>
<div class="t " style="left:654.0px;width:73px;text-align:center;top:237.5px;font-size:12px;color:#000">删除</div>
<div class="a" style="left:732px;top:233px;width:73px;height:21px;background:linear-gradient(#f4f4f4,#ececec 48%,#dcdcdc 52%,#d0d0d0);border:1px solid #707070;border-radius:3px;box-shadow:inset 0 0 0 1px rgba(255,255,255,.7)"></div>
<div class="t " style="left:732.0px;width:73px;text-align:center;top:237.5px;font-size:12px;color:#000">重新初始化...</div>
<div class="a" style="left:810px;top:233px;width:166px;height:21px;background:linear-gradient(#f4f4f4,#ececec 48%,#dcdcdc 52%,#d0d0d0);border:1px solid #707070;border-radius:3px;box-shadow:inset 0 0 0 1px rgba(255,255,255,.7)"></div>
<div class="t " style="left:810.0px;width:166px;text-align:center;top:237.5px;font-size:12px;color:#000">添加到激活配置</div>
<div class="t " style="left:982px;top:237px;font-size:12px;color:#000">搜索-3/3</div>
<div class="a" style="left:1057px;top:233px;width:122px;height:22px;background:#fff;border:1px solid #d0d6dc;border-top-color:#b8c0c8"></div>
<div class="a" style="left:1196px;top:233px;width:73px;height:21px;background:linear-gradient(#f4f4f4,#ececec 48%,#dcdcdc 52%,#d0d0d0);border:1px solid #707070;border-radius:3px;box-shadow:inset 0 0 0 1px rgba(255,255,255,.7)"></div>
<div class="t " style="left:1196.0px;width:73px;text-align:center;top:237.5px;font-size:12px;color:#000">确定</div>
<div class="a" style="left:1274px;top:233px;width:73px;height:21px;background:linear-gradient(#f4f4f4,#ececec 48%,#dcdcdc 52%,#d0d0d0);border:1px solid #707070;border-radius:3px;box-shadow:inset 0 0 0 1px rgba(255,255,255,.7)"></div>
<div class="t " style="left:1274.0px;width:73px;text-align:center;top:237.5px;font-size:12px;color:#000">关闭</div>
<div class="a" style="left:575px;top:289px;width:771px;height:515px;background:#fcfcfc;border:1px solid #8c8e94"></div>
<div class="a" style="left:620px;top:271px;width:41px;height:19px;background:linear-gradient(#f2f2f2,#e4e4e4 50%,#d8d8d8);border:1px solid #8c8e94"></div>
<div class="a" style="left:661px;top:271px;width:40px;height:19px;background:linear-gradient(#f2f2f2,#e4e4e4 50%,#d8d8d8);border:1px solid #8c8e94"></div>
<div class="a" style="left:575px;top:269px;width:46px;height:21px;background:#fcfcfc;border:1px solid #8c8e94;border-bottom:none"></div>
<div class="t " style="left:584px;top:272.0px;font-size:11px;color:#000">48</div>
<div class="t " style="left:625px;top:274.0px;font-size:11px;color:#000">96</div>
<div class="t " style="left:667px;top:274.0px;font-size:11px;color:#000">126</div>
<div class="a" style="left:587px;top:295px;width:429px;height:188px;background:#f0f0f0"></div>
<div class="a" style="left:588px;top:302px;width:427px;height:180px;border:1px solid #d5dfe5;border-radius:3px;box-shadow:inset 1px 1px 0 #fff"></div>
<div class="a" style="left:594px;top:296px;width:52px;height:12px;background:#f0f0f0"></div>
<div class="t " style="left:596px;top:296px;font-size:12px;color:#000">设计参数</div>
<div class="a" style="left:587px;top:493px;width:429px;height:110px;background:#f0f0f0"></div>
<div class="a" style="left:588px;top:500px;width:427px;height:102px;border:1px solid #d5dfe5;border-radius:3px;box-shadow:inset 1px 1px 0 #fff"></div>
<div class="a" style="left:594px;top:494px;width:64px;height:12px;background:#f0f0f0"></div>
<div class="t " style="left:596px;top:494px;font-size:12px;color:#000">子变型设计</div>
<div class="a" style="left:587px;top:612px;width:429px;height:181px;background:#f0f0f0"></div>
<div class="a" style="left:588px;top:619px;width:427px;height:173px;border:1px solid #d5dfe5;border-radius:3px;box-shadow:inset 1px 1px 0 #fff"></div>
<div class="a" style="left:594px;top:613px;width:52px;height:12px;background:#f0f0f0"></div>
<div class="t " style="left:596px;top:613px;font-size:12px;color:#000">常规属性</div>
<div class="a" style="left:1025px;top:295px;width:312px;height:308px;background:#f0f0f0"></div>
<div class="a" style="left:1026px;top:302px;width:310px;height:300px;border:1px solid #d5dfe5;border-radius:3px;box-shadow:inset 1px 1px 0 #fff"></div>
<div class="a" style="left:1032px;top:296px;width:52px;height:12px;background:#f0f0f0"></div>
<div class="t " style="left:1034px;top:296px;font-size:12px;color:#000">预览图像</div>
<div class="a" style="left:1025px;top:612px;width:312px;height:181px;background:#f0f0f0"></div>
<div class="a" style="left:1026px;top:619px;width:310px;height:173px;border:1px solid #d5dfe5;border-radius:3px;box-shadow:inset 1px 1px 0 #fff"></div>
<div class="a" style="left:1032px;top:613px;width:64px;height:12px;background:#f0f0f0"></div>
<div class="t " style="left:1034px;top:613px;font-size:12px;color:#000">自定义属性</div>
<div class="a" style="left:599px;top:313px;width:406px;height:134px;background:#f0f0f0;border-top:2px solid #6a6a6a;border-left:2px solid #6a6a6a;border-right:1px solid #fff;border-bottom:1px solid #fff"></div>
<div class="a" style="left:601px;top:315px;width:415px;height:84px;background:#808080"></div>
<div class="a" style="left:601px;top:315px;width:41px;height:18px;background:#f0f0f0;border-top:1px solid #fff;border-left:1px solid #fff;border-right:2px solid #111;border-bottom:2px solid #111"></div>
<div class="a" style="left:643px;top:315px;width:52px;height:18px;background:#f0f0f0;border-top:1px solid #fff;border-left:1px solid #fff;border-right:2px solid #111;border-bottom:2px solid #111"></div>
<div class="t " style="left:643.0px;width:53px;text-align:center;top:316.0px;font-size:11px;font-weight:bold;color:#000">A</div>
<div class="a" style="left:696px;top:315px;width:99px;height:18px;background:#f0f0f0;border-top:1px solid #fff;border-left:1px solid #fff;border-right:2px solid #111;border-bottom:2px solid #111"></div>
<div class="t " style="left:696.0px;width:100px;text-align:center;top:316.0px;font-size:11px;font-weight:bold;color:#000">B</div>
<div class="a" style="left:796px;top:315px;width:93px;height:18px;background:#f0f0f0;border-top:1px solid #fff;border-left:1px solid #fff;border-right:2px solid #111;border-bottom:2px solid #111"></div>
<div class="t " style="left:796.0px;width:94px;text-align:center;top:316.0px;font-size:11px;font-weight:bold;color:#000">C</div>
<div class="a" style="left:890px;top:315px;width:49px;height:18px;background:#f0f0f0;border-top:1px solid #fff;border-left:1px solid #fff;border-right:2px solid #111;border-bottom:2px solid #111"></div>
<div class="t " style="left:890.0px;width:50px;text-align:center;top:316.0px;font-size:11px;font-weight:bold;color:#000">D</div>
<div class="a" style="left:940px;top:315px;width:75px;height:18px;background:#f0f0f0;border-top:1px solid #fff;border-left:1px solid #fff;border-right:2px solid #111;border-bottom:2px solid #111"></div>
<div class="t " style="left:940.0px;width:76px;text-align:center;top:316.0px;font-size:11px;font-weight:bold;color:#000">E</div>
<div class="a" style="left:601px;top:334px;width:41px;height:16px;background:#f0f0f0;border-top:1px solid #fff;border-left:1px solid #fff;border-right:2px solid #111;border-bottom:2px solid #111"></div>
<div class="t " style="left:604px;top:334.0px;font-size:11px;color:#000">1</div>
<div class="a" style="left:643px;top:334px;width:52px;height:16px;background:#1010f4"></div>
<div class="t " style="left:643.0px;width:53px;text-align:center;top:335.0px;font-size:12px;font-weight:bold;color:#fff">变量名</div>
<div class="a" style="left:696px;top:334px;width:99px;height:16px;background:#1010f4"></div>
<div class="t " style="left:696.0px;width:100px;text-align:center;top:335.0px;font-size:12px;font-weight:bold;color:#fff">当前数值</div>
<div class="a" style="left:796px;top:334px;width:93px;height:16px;background:#1010f4"></div>
<div class="t " style="left:796.0px;width:94px;text-align:center;top:335.0px;font-size:12px;font-weight:bold;color:#fff">设计数值</div>
<div class="a" style="left:890px;top:334px;width:49px;height:16px;background:#1010f4"></div>
<div class="t " style="left:890.0px;width:50px;text-align:center;top:335.0px;font-size:12px;font-weight:bold;color:#fff">单位</div>
<div class="a" style="left:940px;top:334px;width:75px;height:16px;background:#1010f4"></div>
<div class="t " style="left:940.0px;width:76px;text-align:center;top:335.0px;font-size:12px;font-weight:bold;color:#fff">表达式</div>
<div class="a" style="left:601px;top:351px;width:41px;height:15px;background:#f0f0f0;border-top:1px solid #fff;border-left:1px solid #fff;border-right:2px solid #111;border-bottom:2px solid #111"></div>
<div class="t " style="left:604px;top:350.5px;font-size:11px;color:#000">2</div>
<div class="a" style="left:643px;top:351px;width:52px;height:15px;background:#e6e6fa"></div>
<div class="t " style="left:646px;top:350.5px;font-size:11px;font-weight:bold;color:#000">T</div>
<div class="a" style="left:696px;top:351px;width:99px;height:15px;background:#fff"></div>
<div class="t " style="left:699px;top:350.5px;font-size:11px;color:#000">4.83</div>
<div class="a" style="left:796px;top:351px;width:93px;height:15px;background:#fff"></div>
<div class="t " style="left:799px;top:350.5px;font-size:11px;color:#000">.19</div>
<div class="a" style="left:890px;top:351px;width:49px;height:15px;background:#fff"></div>
<div class="t " style="left:893px;top:350.5px;font-size:11px;color:#000">mm</div>
<div class="a" style="left:940px;top:351px;width:75px;height:15px;background:#fff"></div>
<div class="a" style="left:601px;top:367px;width:41px;height:15px;background:#f0f0f0;border-top:1px solid #fff;border-left:1px solid #fff;border-right:2px solid #111;border-bottom:2px solid #111"></div>
<div class="t " style="left:604px;top:366.5px;font-size:11px;color:#000">3</div>
<div class="a" style="left:643px;top:367px;width:52px;height:15px;background:#e6e6fa"></div>
<div class="t " style="left:646px;top:366.5px;font-size:11px;font-weight:bold;color:#000">OD</div>
<div class="a" style="left:696px;top:367px;width:99px;height:15px;background:#fff"></div>
<div class="t " style="left:699px;top:366.5px;font-size:11px;color:#000">1,219.20</div>
<div class="a" style="left:796px;top:367px;width:93px;height:15px;background:#fff"></div>
<div class="t " style="left:799px;top:366.5px;font-size:11px;color:#000">48.00</div>
<div class="a" style="left:890px;top:367px;width:49px;height:15px;background:#fff"></div>
<div class="t " style="left:893px;top:366.5px;font-size:11px;color:#000">mm</div>
<div class="a" style="left:940px;top:367px;width:75px;height:15px;background:#fff"></div>
<div class="a" style="left:601px;top:383px;width:41px;height:15px;background:#f0f0f0;border-top:1px solid #fff;border-left:1px solid #fff;border-right:2px solid #111;border-bottom:2px solid #111"></div>
<div class="t " style="left:604px;top:382.5px;font-size:11px;color:#000">4</div>
<div class="a" style="left:643px;top:383px;width:52px;height:15px;background:#e6e6fa"></div>
<div class="t " style="left:646px;top:382.5px;font-size:11px;font-weight:bold;color:#000">OAL</div>
<div class="a" style="left:696px;top:383px;width:99px;height:15px;background:#fff"></div>
<div class="t " style="left:699px;top:382.5px;font-size:11px;color:#000">1,219.20</div>
<div class="a" style="left:796px;top:383px;width:93px;height:15px;background:#fff"></div>
<div class="t " style="left:799px;top:382.5px;font-size:11px;color:#000">48.00</div>
<div class="a" style="left:890px;top:383px;width:49px;height:15px;background:#fff"></div>
<div class="t " style="left:893px;top:382.5px;font-size:11px;color:#000">mm</div>
<div class="a" style="left:940px;top:383px;width:75px;height:15px;background:#fff"></div>
<div class="a" style="left:1005px;top:313px;width:11px;height:134px;background:#f0f0f0;border-left:1px solid #fff"></div>
<div class="a" style="left:1014px;top:313px;width:1px;height:134px;background:#d5dfe5"></div>
<div class="a" style="left:1015px;top:313px;width:1px;height:134px;background:#fff"></div>
<div class="a" style="left:601px;top:430px;width:404px;height:17px;background:#eaeaea;border-top:1px solid #e4e4e4"></div>
<svg class="a" style="left:604px;top:433px;" width="8" height="10" viewBox="0 0 8 10"><path d="M6 1.5 L2.5 5 L6 8.5 Z" fill="#555"/></svg>
<svg class="a" style="left:991px;top:433px;" width="8" height="10" viewBox="0 0 8 10"><path d="M2 1.5 L5.5 5 L2 8.5 Z" fill="#555"/></svg>
<div class="a" style="left:617px;top:431px;width:18px;height:15px;background:linear-gradient(90deg,#f4f4f4,#dcdcdc);border:1px solid #9a9a9a;border-radius:2px"></div>
<div class="a" style="left:599px;top:461px;width:13px;height:13px;border-radius:50%;background:radial-gradient(#fff,#e4e4e4);border:1px solid #8e8f8f"></div>
<div class="a" style="left:602px;top:464px;width:7px;height:7px;border-radius:50%;background:radial-gradient(circle at 40% 40%,#8ab8f0,#1a4a9a)"></div>
<div class="t " style="left:614px;top:461px;font-size:12px;color:#000">显示全部</div>
<div class="a" style="left:701px;top:461px;width:13px;height:13px;border-radius:50%;background:radial-gradient(#fff,#e4e4e4);border:1px solid #8e8f8f"></div>
<div class="t " style="left:716px;top:461px;font-size:12px;color:#000">显示驱动</div>
<div class="a" style="left:827px;top:461px;width:13px;height:13px;border-radius:50%;background:radial-gradient(#fff,#e4e4e4);border:1px solid #8e8f8f"></div>
<div class="t " style="left:842px;top:461px;font-size:12px;color:#000">显示所选</div>
<div class="a" style="left:599px;top:514px;width:406px;height:76px;background:#f0f0f0;border-top:2px solid #6a6a6a;border-left:2px solid #6a6a6a;border-right:1px solid #fff;border-bottom:1px solid #fff"></div>
<div class="a" style="left:601px;top:516px;width:183px;height:35px;background:#808080"></div>
<div class="a" style="left:601px;top:516px;width:41px;height:17px;background:#f0f0f0;border-top:1px solid #fff;border-left:1px solid #fff;border-right:2px solid #111;border-bottom:2px solid #111"></div>
<div class="a" style="left:643px;top:516px;width:69px;height:17px;background:#f0f0f0;border-top:1px solid #fff;border-left:1px solid #fff;border-right:2px solid #111;border-bottom:2px solid #111"></div>
<div class="t " style="left:643.0px;width:70px;text-align:center;top:516.5px;font-size:11px;font-weight:bold;color:#000">A</div>
<div class="a" style="left:713px;top:516px;width:70px;height:17px;background:#f0f0f0;border-top:1px solid #fff;border-left:1px solid #fff;border-right:2px solid #111;border-bottom:2px solid #111"></div>
<div class="t " style="left:713.0px;width:71px;text-align:center;top:516.5px;font-size:11px;font-weight:bold;color:#000">B</div>
<div class="a" style="left:601px;top:534px;width:41px;height:16px;background:#f0f0f0;border-top:1px solid #fff;border-left:1px solid #fff;border-right:2px solid #111;border-bottom:2px solid #111"></div>
<div class="t " style="left:604px;top:534.0px;font-size:11px;color:#000">1</div>
<div class="a" style="left:643px;top:534px;width:69px;height:16px;background:#1010f4"></div>
<div class="t " style="left:643.0px;width:70px;text-align:center;top:535.0px;font-size:12px;font-weight:bold;color:#fff">子</div>
<div class="a" style="left:713px;top:534px;width:70px;height:16px;background:#1010f4"></div>
<div class="t " style="left:713.0px;width:71px;text-align:center;top:535.0px;font-size:12px;font-weight:bold;color:#fff">设计</div>
<div class="a" style="left:599px;top:639px;width:406px;height:141px;background:#f0f0f0;border-top:2px solid #6a6a6a;border-left:2px solid #6a6a6a;border-right:1px solid #fff;border-bottom:1px solid #fff"></div>
<div class="a" style="left:601px;top:641px;width:322px;height:99px;background:#808080"></div>
<div class="a" style="left:601px;top:641px;width:41px;height:17px;background:#f0f0f0;border-top:1px solid #fff;border-left:1px solid #fff;border-right:2px solid #111;border-bottom:2px solid #111"></div>
<div class="a" style="left:643px;top:641px;width:72px;height:17px;background:#f0f0f0;border-top:1px solid #fff;border-left:1px solid #fff;border-right:2px solid #111;border-bottom:2px solid #111"></div>
<div class="t " style="left:643.0px;width:73px;text-align:center;top:641.5px;font-size:11px;font-weight:bold;color:#000">A</div>
<div class="a" style="left:716px;top:641px;width:102px;height:17px;background:#f0f0f0;border-top:1px solid #fff;border-left:1px solid #fff;border-right:2px solid #111;border-bottom:2px solid #111"></div>
<div class="t " style="left:716.0px;width:103px;text-align:center;top:641.5px;font-size:11px;font-weight:bold;color:#000">B</div>
<div class="a" style="left:819px;top:641px;width:103px;height:17px;background:#f0f0f0;border-top:1px solid #fff;border-left:1px solid #fff;border-right:2px solid #111;border-bottom:2px solid #111"></div>
<div class="t " style="left:819.0px;width:104px;text-align:center;top:641.5px;font-size:11px;font-weight:bold;color:#000">C</div>
<div class="a" style="left:601px;top:659px;width:41px;height:16px;background:#f0f0f0;border-top:1px solid #fff;border-left:1px solid #fff;border-right:2px solid #111;border-bottom:2px solid #111"></div>
<div class="t " style="left:604px;top:659.0px;font-size:11px;color:#000">1</div>
<div class="a" style="left:643px;top:659px;width:72px;height:16px;background:#1010f4"></div>
<div class="t " style="left:643.0px;width:73px;text-align:center;top:660.0px;font-size:12px;font-weight:bold;color:#fff">属性</div>
<div class="a" style="left:716px;top:659px;width:102px;height:16px;background:#1010f4"></div>
<div class="t " style="left:716.0px;width:103px;text-align:center;top:660.0px;font-size:12px;font-weight:bold;color:#fff">当前数值</div>
<div class="a" style="left:819px;top:659px;width:103px;height:16px;background:#1010f4"></div>
<div class="t " style="left:819.0px;width:104px;text-align:center;top:660.0px;font-size:12px;font-weight:bold;color:#fff">设计数值</div>
<div class="a" style="left:601px;top:676px;width:41px;height:15px;background:#f0f0f0;border-top:1px solid #fff;border-left:1px solid #fff;border-right:2px solid #111;border-bottom:2px solid #111"></div>
<div class="t " style="left:604px;top:675.5px;font-size:11px;color:#000">2</div>
<div class="a" style="left:643px;top:676px;width:72px;height:15px;background:#e6e6fa"></div>
<div class="t " style="left:646px;top:676.5px;font-size:12px;font-weight:bold;color:#000">名称</div>
<div class="a" style="left:716px;top:676px;width:102px;height:15px;background:#fff"></div>
<div class="t " style="left:719px;top:676.5px;font-size:12px;color:#000">水箱外壳</div>
<div class="a" style="left:819px;top:676px;width:103px;height:15px;background:#fff"></div>
<div class="t " style="left:822px;top:676.5px;font-size:12px;color:#000">水箱外壳</div>
<div class="a" style="left:601px;top:692px;width:41px;height:15px;background:#f0f0f0;border-top:1px solid #fff;border-left:1px solid #fff;border-right:2px solid #111;border-bottom:2px solid #111"></div>
<div class="t " style="left:604px;top:691.5px;font-size:11px;color:#000">3</div>
<div class="a" style="left:643px;top:692px;width:72px;height:15px;background:#e6e6fa"></div>
<div class="t " style="left:646px;top:692.5px;font-size:12px;font-weight:bold;color:#000">数量</div>
<div class="a" style="left:716px;top:692px;width:102px;height:15px;background:#fff"></div>
<div class="a" style="left:819px;top:692px;width:103px;height:15px;background:#fff"></div>
<div class="a" style="left:601px;top:708px;width:41px;height:15px;background:#f0f0f0;border-top:1px solid #fff;border-left:1px solid #fff;border-right:2px solid #111;border-bottom:2px solid #111"></div>
<div class="t " style="left:604px;top:707.5px;font-size:11px;color:#000">4</div>
<div class="a" style="left:643px;top:708px;width:72px;height:15px;background:#e6e6fa"></div>
<div class="t " style="left:646px;top:708.5px;font-size:12px;font-weight:bold;color:#000">描述</div>
<div class="a" style="left:716px;top:708px;width:102px;height:15px;background:#fff"></div>
<div class="a" style="left:819px;top:708px;width:103px;height:15px;background:#fff"></div>
<div class="a" style="left:601px;top:724px;width:41px;height:15px;background:#f0f0f0;border-top:1px solid #fff;border-left:1px solid #fff;border-right:2px solid #111;border-bottom:2px solid #111"></div>
<div class="t " style="left:604px;top:723.5px;font-size:11px;color:#000">5</div>
<div class="a" style="left:643px;top:724px;width:72px;height:15px;background:#e6e6fa"></div>
<div class="t " style="left:646px;top:724.5px;font-size:12px;font-weight:bold;color:#000">颜色</div>
<div class="a" style="left:716px;top:724px;width:102px;height:15px;background:#804000"></div>
<div class="t " style="left:719px;top:723.5px;font-size:11px;color:#94b4ec">R:128 G:64 B:0</div>
<div class="a" style="left:819px;top:724px;width:103px;height:15px;background:#804000"></div>
<div class="t " style="left:822px;top:723.5px;font-size:11px;color:#94b4ec">R:128 G:64 B:0</div>
<div class="a" style="left:1037px;top:639px;width:287px;height:143px;background:#f0f0f0;border-top:2px solid #6a6a6a;border-left:2px solid #6a6a6a;border-right:1px solid #fff;border-bottom:1px solid #fff"></div>
<div class="a" style="left:1039px;top:641px;width:271px;height:35px;background:#808080"></div>
<div class="a" style="left:1039px;top:641px;width:41px;height:17px;background:#f0f0f0;border-top:1px solid #fff;border-left:1px solid #fff;border-right:2px solid #111;border-bottom:2px solid #111"></div>
<div class="a" style="left:1081px;top:641px;width:46px;height:17px;background:#f0f0f0;border-top:1px solid #fff;border-left:1px solid #fff;border-right:2px solid #111;border-bottom:2px solid #111"></div>
<div class="t " style="left:1081.0px;width:47px;text-align:center;top:641.5px;font-size:11px;font-weight:bold;color:#000">A</div>
<div class="a" style="left:1128px;top:641px;width:92px;height:17px;background:#f0f0f0;border-top:1px solid #fff;border-left:1px solid #fff;border-right:2px solid #111;border-bottom:2px solid #111"></div>
<div class="t " style="left:1128.0px;width:93px;text-align:center;top:641.5px;font-size:11px;font-weight:bold;color:#000">B</div>
<div class="a" style="left:1221px;top:641px;width:88px;height:17px;background:#f0f0f0;border-top:1px solid #fff;border-left:1px solid #fff;border-right:2px solid #111;border-bottom:2px solid #111"></div>
<div class="t " style="left:1221.0px;width:89px;text-align:center;top:641.5px;font-size:11px;font-weight:bold;color:#000">C</div>
<div class="a" style="left:1039px;top:659px;width:41px;height:16px;background:#f0f0f0;border-top:1px solid #fff;border-left:1px solid #fff;border-right:2px solid #111;border-bottom:2px solid #111"></div>
<div class="t " style="left:1042px;top:659.0px;font-size:11px;color:#000">1</div>
<div class="a" style="left:1081px;top:659px;width:46px;height:16px;background:#1010f4"></div>
<div class="t " style="left:1081.0px;width:47px;text-align:center;top:660.0px;font-size:12px;font-weight:bold;color:#fff">Name</div>
<div class="a" style="left:1128px;top:659px;width:92px;height:16px;background:#1010f4"></div>
<div class="t " style="left:1128.0px;width:93px;text-align:center;top:660.0px;font-size:12px;font-weight:bold;color:#fff">Current Value</div>
<div class="a" style="left:1221px;top:659px;width:88px;height:16px;background:#1010f4"></div>
<div class="t " style="left:1221.0px;width:89px;text-align:center;top:660.0px;font-size:12px;font-weight:bold;color:#fff">Design Value</div>
<svg class="a" style="left:1037px;top:340px;" width="288" height="215" viewBox="0 0 288 215"><defs><linearGradient id="pv" x1="0" y1="0" x2="0" y2="1"><stop offset="0" stop-color="#4c709c"/><stop offset=".35" stop-color="#86a0be"/><stop offset=".7" stop-color="#c4d0de"/><stop offset="1" stop-color="#fafbfc"/></linearGradient><linearGradient id="cy" x1="0" y1="0" x2="1" y2="0"><stop offset="0" stop-color="#3a1e06"/><stop offset=".25" stop-color="#4a2a0c"/><stop offset=".5" stop-color="#5a3c1e"/><stop offset=".78" stop-color="#4a2a0a"/><stop offset="1" stop-color="#5a2e04"/></linearGradient><linearGradient id="ct" x1="0" y1="0" x2="1" y2="0"><stop offset="0" stop-color="#5a3008"/><stop offset=".5" stop-color="#4a2c10"/><stop offset="1" stop-color="#3a2008"/></linearGradient></defs><rect x="0" y="0" width="288" height="215" fill="url(#pv)" stroke="#7a7a7a" stroke-width="2"/><path d="M87 58 L91 154 A52 27 0 0 0 195 154 L200 58 Z" fill="url(#cy)"/><ellipse cx="143.5" cy="58" rx="56.5" ry="21" fill="url(#ct)" stroke="#1a0c00" stroke-width=".7"/><path d="M181 77 L177 170" stroke="#1a0c00" stroke-width=".8"/><path d="M143 48 V57 L148 55" stroke="#2020c0" stroke-width=".8" fill="none"/></svg>
<div class="a" style="left:1086px;top:569px;width:70px;height:23px;background:linear-gradient(#f4f4f4,#ececec 48%,#dcdcdc 52%,#d0d0d0);border:1px solid #707070;border-radius:3px;box-shadow:inset 0 0 0 1px rgba(255,255,255,.7)"></div>
<div class="t " style="left:1086.0px;width:70px;text-align:center;top:574.5px;font-size:12px;color:#000">生成</div>
<div class="a" style="left:1200px;top:569px;width:70px;height:23px;background:linear-gradient(#f4f4f4,#ececec 48%,#dcdcdc 52%,#d0d0d0);border:1px solid #707070;border-radius:3px;box-shadow:inset 0 0 0 1px rgba(255,255,255,.7)"></div>
<div class="t " style="left:1200.0px;width:70px;text-align:center;top:574.5px;font-size:12px;color:#000">浏览...</div></body></html>
